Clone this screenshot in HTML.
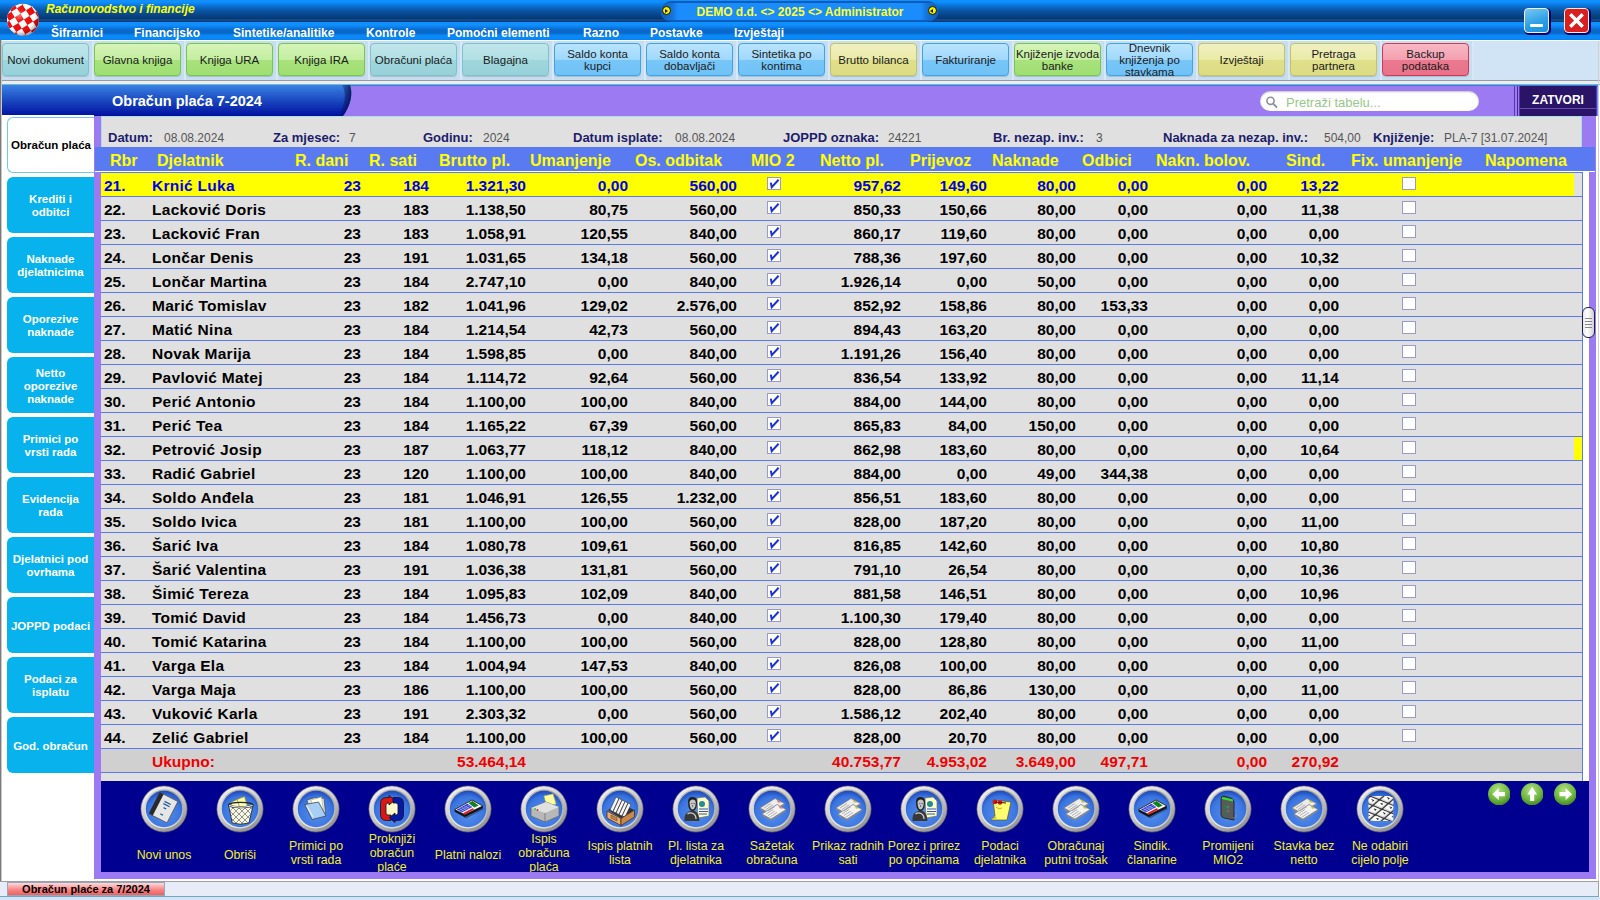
<!DOCTYPE html><html><head><meta charset="utf-8"><style>
*{margin:0;padding:0;box-sizing:border-box}
html,body{width:1600px;height:900px;overflow:hidden;background:#fff;font-family:"Liberation Sans", sans-serif}
.a{position:absolute}
.t{position:absolute;white-space:pre;line-height:20px}
.r{text-align:right}
.c{text-align:center}
#title{left:0;top:0;width:1600px;height:22px;background:linear-gradient(#1090ff 0px,#1090ff 2px,#0a78e0 5px,#0a58a8 10px,#08448a 15px,#063a70 18.5px,#0a4a90 19.5px,#0a4a90 20.5px,#083870 21px,#083870 22px)}
#menu{left:0;top:22px;width:1600px;height:18px;background:linear-gradient(#1090ff 0px,#1090ff 3px,#0a78e0 6px,#0a68c8 8px,#0a68c8 11px,#0a88f8 13.5px,#0a88f8 17px,#0080f0 18px)}
.mi{color:#fff;font-weight:bold;font-size:12px;top:22px;line-height:20px}
#tb{left:0;top:40px;width:1600px;height:41px;background:#d0e4f6;border-top:1px solid #ffffff;border-bottom:1px solid #9a9a9a}
.btn{position:absolute;top:43px;width:86px;height:33px;border-radius:4px;font-size:11.5px;color:#1a1a1a;text-align:center;display:flex;align-items:center;justify-content:center;line-height:12px;box-shadow:0 1px 1px rgba(0,0,0,.15)}
.teal{background:linear-gradient(#c0e6ea 0%,#b0dfe4 50%,#9ed6dc 51%,#98d2d8 100%);border:1px solid #7cc2ca}
.green{background:linear-gradient(#d6f4b8 0%,#c4eea0 50%,#a8e27c 51%,#a0de74 100%);border:1px solid #74c84c}
.blue{background:linear-gradient(#b8e4ff 0%,#a0d8fc 50%,#78c6f8 51%,#70c2f6 100%);border:1px solid #3ea4e8}
.yellow{background:linear-gradient(#f0f0c0 0%,#eaeaa8 50%,#e0e08c 51%,#dcdc84 100%);border:1px solid #c4c464}
.pink{background:linear-gradient(#f8b8c4 0%,#f4a0b0 50%,#ea7a90 51%,#e8728a 100%);border:1px solid #d03a5a}
.lab{font-weight:bold;font-size:13px;color:#1c1c6c;line-height:20px}
.val{font-size:12px;color:#555;line-height:20px}
.hd{font-weight:bold;font-size:16px;color:#ffff00;line-height:20px}
.rw{font-weight:bold;font-size:15.5px;color:#000;line-height:20px}
.sel{color:#0000f0}
.tot{color:#f00000}
.tab{position:absolute;left:7px;width:87px;height:56px;border-radius:6px 0 0 6px;background:#08b2ec;color:#fff;font-weight:bold;font-size:11.5px;line-height:13px;display:flex;align-items:center;justify-content:center;text-align:center;padding-top:2px}
.ic{position:absolute;top:786px;width:46px;height:46px}
.il{position:absolute;width:100px;color:#f0f020;font-size:12.3px;line-height:14px;text-align:center;display:flex;align-items:center;justify-content:center;height:60px;top:823px}
</style></head><body>
<div id="title" class="a"></div>
<div id="menu" class="a"></div>
<svg class="a" style="left:5px;top:2px" width="36" height="36" viewBox="0 0 36 36">
<defs><clipPath id="bc"><circle cx="17.9" cy="17.7" r="15.9"/></clipPath>
<radialGradient id="bs" cx="0.38" cy="0.36" r="0.7"><stop offset="0" stop-color="#fff" stop-opacity="0.45"/><stop offset="0.25" stop-color="#fff" stop-opacity="0.05"/><stop offset="0.7" stop-color="#000" stop-opacity="0"/><stop offset="1" stop-color="#000" stop-opacity="0.45"/></radialGradient></defs>
<g clip-path="url(#bc)"><rect width="36" height="36" fill="#fff"/>
<g fill="#ee0c0c" transform="rotate(-32 17 17)"><rect x="-8.0" y="-8.0" width="6.6" height="6.6"/><rect x="-8.0" y="5.2" width="6.6" height="6.6"/><rect x="-8.0" y="18.4" width="6.6" height="6.6"/><rect x="-8.0" y="31.6" width="6.6" height="6.6"/><rect x="-8.0" y="44.8" width="6.6" height="6.6"/><rect x="-1.4" y="-1.4" width="6.6" height="6.6"/><rect x="-1.4" y="11.8" width="6.6" height="6.6"/><rect x="-1.4" y="25.0" width="6.6" height="6.6"/><rect x="-1.4" y="38.2" width="6.6" height="6.6"/><rect x="5.2" y="-8.0" width="6.6" height="6.6"/><rect x="5.2" y="5.2" width="6.6" height="6.6"/><rect x="5.2" y="18.4" width="6.6" height="6.6"/><rect x="5.2" y="31.6" width="6.6" height="6.6"/><rect x="5.2" y="44.8" width="6.6" height="6.6"/><rect x="11.8" y="-1.4" width="6.6" height="6.6"/><rect x="11.8" y="11.8" width="6.6" height="6.6"/><rect x="11.8" y="25.0" width="6.6" height="6.6"/><rect x="11.8" y="38.2" width="6.6" height="6.6"/><rect x="18.4" y="-8.0" width="6.6" height="6.6"/><rect x="18.4" y="5.2" width="6.6" height="6.6"/><rect x="18.4" y="18.4" width="6.6" height="6.6"/><rect x="18.4" y="31.6" width="6.6" height="6.6"/><rect x="18.4" y="44.8" width="6.6" height="6.6"/><rect x="25.0" y="-1.4" width="6.6" height="6.6"/><rect x="25.0" y="11.8" width="6.6" height="6.6"/><rect x="25.0" y="25.0" width="6.6" height="6.6"/><rect x="25.0" y="38.2" width="6.6" height="6.6"/><rect x="31.6" y="-8.0" width="6.6" height="6.6"/><rect x="31.6" y="5.2" width="6.6" height="6.6"/><rect x="31.6" y="18.4" width="6.6" height="6.6"/><rect x="31.6" y="31.6" width="6.6" height="6.6"/><rect x="31.6" y="44.8" width="6.6" height="6.6"/><rect x="38.2" y="-1.4" width="6.6" height="6.6"/><rect x="38.2" y="11.8" width="6.6" height="6.6"/><rect x="38.2" y="25.0" width="6.6" height="6.6"/><rect x="38.2" y="38.2" width="6.6" height="6.6"/><rect x="44.8" y="-8.0" width="6.6" height="6.6"/><rect x="44.8" y="5.2" width="6.6" height="6.6"/><rect x="44.8" y="18.4" width="6.6" height="6.6"/><rect x="44.8" y="31.6" width="6.6" height="6.6"/><rect x="44.8" y="44.8" width="6.6" height="6.6"/></g><circle cx="17.9" cy="17.7" r="15.9" fill="url(#bs)"/></g></svg>
<div class="t " style="left:46px;top:0px;color:#ffff00;font-style:italic;font-weight:bold;font-size:12px;line-height:19px">Računovodstvo i financije</div>
<div class="a" style="left:661px;top:1px;width:277px;height:21px;border-radius:10px;background:#0c5cb8"></div>
<div class="a" style="left:661px;top:3px;width:277px;height:17px;border-radius:9px;background:#1a8cfc"></div>
<div class="a" style="left:661px;top:3px;width:17px;height:17px;border-radius:9px 0 0 9px;background:linear-gradient(90deg,#0c5ab4,#1676dc 70%,#1a8cfc)"></div>
<div class="a" style="left:921px;top:3px;width:17px;height:17px;border-radius:0 9px 9px 0;background:linear-gradient(270deg,#0c5ab4,#1676dc 70%,#1a8cfc)"></div>
<div class="a" style="left:662.0px;top:6px;width:9px;height:9px;border-radius:50%;background:#f8f000;border:1px solid #101000"></div>
<div class="a" style="left:665.0px;top:8.5px;width:0;height:0;border-top:2.5px solid transparent;border-bottom:2.5px solid transparent;border-left:3.5px solid #202020"></div>
<div class="a" style="left:928.0px;top:6px;width:9px;height:9px;border-radius:50%;background:#f8f000;border:1px solid #101000"></div>
<div class="a" style="left:931.0px;top:8.5px;width:0;height:0;border-top:2.5px solid transparent;border-bottom:2.5px solid transparent;border-right:3.5px solid #202020;margin-left:-1px"></div>
<div class="t c " style="left:650.0px;top:2.5px;width:300px;color:#ffff30;font-weight:bold;font-size:12px;line-height:19px">DEMO d.d. &lt;&gt; 2025 &lt;&gt; Administrator</div>
<div class="t mi" style="left:51px;top:23px;line-height:20px">Šifrarnici</div>
<div class="t mi" style="left:134px;top:23px;line-height:20px">Financijsko</div>
<div class="t mi" style="left:233px;top:23px;line-height:20px">Sintetike/analitike</div>
<div class="t mi" style="left:366px;top:23px;line-height:20px">Kontrole</div>
<div class="t mi" style="left:447px;top:23px;line-height:20px">Pomoćni elementi</div>
<div class="t mi" style="left:583px;top:23px;line-height:20px">Razno</div>
<div class="t mi" style="left:650px;top:23px;line-height:20px">Postavke</div>
<div class="t mi" style="left:734px;top:23px;line-height:20px">Izvještaji</div>
<div class="a" style="left:1524px;top:8px;width:25px;height:25px;border-radius:4px;background:linear-gradient(160deg,#78c8f4,#2a9ee4 60%,#1890d8);border:1.5px solid #f4f0d8;box-shadow:1px 1px 0 1px #000070"></div>
<div class="a" style="left:1530px;top:24px;width:13px;height:3px;border-radius:1px;background:#fff"></div>
<div class="a" style="left:1564px;top:8px;width:25px;height:25px;border-radius:4px;background:#d82020;border:1.5px solid #f4f0d8;box-shadow:1px 1px 0 1px #000070"></div>
<svg class="a" style="left:1564px;top:8px" width="25" height="25"><path d="M7.5 7.5 L17.5 17.5 M17.5 7.5 L7.5 17.5" stroke="#fff" stroke-width="3.4" stroke-linecap="square"/></svg>
<div id="tb" class="a"></div>
<div class="a" style="left:0px;top:41px;width:92px;height:39px;background:#c6def0;border-left:2px solid #d8e8f8"></div>
<div class="a" style="left:92px;top:41px;width:92px;height:39px;background:#c6def0;border-left:2px solid #d8e8f8"></div>
<div class="a" style="left:184px;top:41px;width:92px;height:39px;background:#c6def0;border-left:2px solid #d8e8f8"></div>
<div class="a" style="left:276px;top:41px;width:92px;height:39px;background:#c6def0;border-left:2px solid #d8e8f8"></div>
<div class="a" style="left:368px;top:41px;width:92px;height:39px;background:#c6def0;border-left:2px solid #d8e8f8"></div>
<div class="a" style="left:460px;top:41px;width:92px;height:39px;background:#c6def0;border-left:2px solid #d8e8f8"></div>
<div class="a" style="left:552px;top:41px;width:92px;height:39px;background:#c6def0;border-left:2px solid #d8e8f8"></div>
<div class="a" style="left:644px;top:41px;width:92px;height:39px;background:#c6def0;border-left:2px solid #d8e8f8"></div>
<div class="a" style="left:736px;top:41px;width:92px;height:39px;background:#c6def0;border-left:2px solid #d8e8f8"></div>
<div class="a" style="left:828px;top:41px;width:92px;height:39px;background:#c6def0;border-left:2px solid #d8e8f8"></div>
<div class="a" style="left:920px;top:41px;width:92px;height:39px;background:#c6def0;border-left:2px solid #d8e8f8"></div>
<div class="a" style="left:1012px;top:41px;width:92px;height:39px;background:#c6def0;border-left:2px solid #d8e8f8"></div>
<div class="a" style="left:1104px;top:41px;width:92px;height:39px;background:#c6def0;border-left:2px solid #d8e8f8"></div>
<div class="a" style="left:1196px;top:41px;width:92px;height:39px;background:#c6def0;border-left:2px solid #d8e8f8"></div>
<div class="a" style="left:1288px;top:41px;width:92px;height:39px;background:#c6def0;border-left:2px solid #d8e8f8"></div>
<div class="a" style="left:1380px;top:41px;width:92px;height:39px;background:#c6def0;border-left:2px solid #d8e8f8"></div>
<div class="btn teal" style="left:2px;width:87px">Novi dokument</div>
<div class="btn green" style="left:94px;width:87px">Glavna knjiga</div>
<div class="btn green" style="left:186px;width:87px">Knjiga URA</div>
<div class="btn green" style="left:278px;width:87px">Knjiga IRA</div>
<div class="btn teal" style="left:370px;width:87px">Obračuni plaća</div>
<div class="btn teal" style="left:462px;width:87px">Blagajna</div>
<div class="btn blue" style="left:554px;width:87px">Saldo konta<br>kupci</div>
<div class="btn blue" style="left:646px;width:87px">Saldo konta<br>dobavljači</div>
<div class="btn blue" style="left:738px;width:87px">Sintetika po<br>kontima</div>
<div class="btn yellow" style="left:830px;width:87px">Brutto bilanca</div>
<div class="btn blue" style="left:922px;width:87px">Fakturiranje</div>
<div class="btn green" style="left:1014px;width:87px">Knjiženje izvoda<br>banke</div>
<div class="btn blue" style="left:1106px;width:87px">Dnevnik<br>knjiženja po<br>stavkama</div>
<div class="btn yellow" style="left:1198px;width:87px">Izvještaji</div>
<div class="btn yellow" style="left:1290px;width:87px">Pretraga<br>partnera</div>
<div class="btn pink" style="left:1382px;width:87px">Backup<br>podataka</div>
<div class="a" style="left:1472px;top:41px;width:128px;height:39px;background:#d0e4f6;border-left:2px solid #d8e8f8"></div>
<div class="a" style="left:0;top:81px;width:1600px;height:3px;background:#e8eef8"></div>
<div class="a" style="left:0;top:84px;width:1600px;height:1px;background:#70b8d8"></div>
<div class="a" style="left:2px;top:85px;width:1596px;height:31px;background:#9b7af2;border-top:1px solid #3a7ae0"></div>
<svg class="a" style="left:2px;top:85px" width="360" height="31" viewBox="0 0 360 31"><defs><linearGradient id="hg" x1="0" y1="0" x2="0" y2="1"><stop offset="0" stop-color="#3a82e4"/><stop offset="0.5" stop-color="#1a48c0"/><stop offset="1" stop-color="#0010a0"/></linearGradient><linearGradient id="hs" x1="0" y1="0" x2="1" y2="0"><stop offset="0" stop-color="#000040" stop-opacity="0"/><stop offset="1" stop-color="#000030" stop-opacity="0.7"/></linearGradient></defs><path d="M0 0 H348 C351 8 349 20 341 31 H0 Z" fill="url(#hg)"/><path d="M340 0 H348 C351 8 349 20 341 31 H336 C343 20 345 8 340 0Z" fill="url(#hs)"/></svg>
<div class="t " style="left:112px;top:91px;color:#fff;font-weight:bold;font-size:14.5px;line-height:20px">Obračun plaća 7-2024</div>
<div class="a" style="left:1260px;top:91px;width:219px;height:20px;border-radius:10px;background:#fff;box-shadow:inset 0 1px 2px rgba(0,0,0,.25)"></div>
<svg class="a" style="left:1264px;top:94px" width="16" height="16"><circle cx="6.5" cy="6.8" r="3.6" fill="none" stroke="#909098" stroke-width="1.6"/><path d="M9.2 9.6 L12.5 13" stroke="#909098" stroke-width="1.8" stroke-linecap="round"/></svg>
<div class="t " style="left:1286px;top:93px;color:#98c888;font-size:13px;line-height:20px">Pretraži tabelu...</div>
<div class="a" style="left:1514px;top:86px;width:1px;height:30px;background:#5a3aa8"></div>
<div class="a" style="left:1516.5px;top:86px;width:1px;height:30px;background:#4a2a98"></div>
<div class="a" style="left:1519px;top:86px;width:1px;height:30px;background:#5a3aa8"></div>
<div class="a" style="left:1520px;top:86px;width:76px;height:30px;background:#2a1468"></div>
<div class="a" style="left:1596px;top:86px;width:1px;height:30px;background:#1a50d0"></div>
<div class="a" style="left:1520px;top:108px;width:76px;height:1px;background:#6a4ab0"></div>
<div class="t c " style="left:1520.0px;top:90px;width:76px;color:#fff;font-weight:bold;font-size:12px;line-height:20px">ZATVORI</div>
<div class="a" style="left:2px;top:115px;width:92px;height:1px;background:#fff"></div>
<div class="a" style="left:0;top:40px;width:1px;height:842px;background:#7a7a7a"></div><div class="a" style="left:1px;top:40px;width:1px;height:842px;background:#c8c8c8"></div>
<div class="tab" style="top:117px;background:#fff;color:#000;border:1px solid #70c8ec;border-right:none;font-size:11.5px;padding-top:0">Obračun plaća</div>
<div class="tab" style="top:177px">Krediti i<br>odbitci</div>
<div class="tab" style="top:237px">Naknade<br>djelatnicima</div>
<div class="tab" style="top:297px">Oporezive<br>naknade</div>
<div class="tab" style="top:357px">Netto<br>oporezive<br>naknade</div>
<div class="tab" style="top:417px">Primici po<br>vrsti rada</div>
<div class="tab" style="top:477px">Evidencija<br>rada</div>
<div class="tab" style="top:537px">Djelatnici pod<br>ovrhama</div>
<div class="tab" style="top:597px">JOPPD podaci</div>
<div class="tab" style="top:657px">Podaci za<br>isplatu</div>
<div class="tab" style="top:717px">God. obračun</div>
<div class="a" style="left:94px;top:116px;width:1502px;height:763px;background:#9b7af2"></div>
<div class="a" style="left:101px;top:116px;width:1481px;height:31px;background:#e0e0e0;border-left:1px solid #a8e0e8;border-top:1px solid #a8e0e8;border-right:1px solid #a8e0e8"></div>
<div class="t lab" style="left:108px;top:128px;">Datum:</div>
<div class="t val" style="left:164px;top:128px;">08.08.2024</div>
<div class="t lab" style="left:273px;top:128px;">Za mjesec:</div>
<div class="t val" style="left:349px;top:128px;">7</div>
<div class="t lab" style="left:423px;top:128px;">Godinu:</div>
<div class="t val" style="left:483px;top:128px;">2024</div>
<div class="t lab" style="left:573px;top:128px;">Datum isplate:</div>
<div class="t val" style="left:675px;top:128px;">08.08.2024</div>
<div class="t lab" style="left:783px;top:128px;">JOPPD oznaka:</div>
<div class="t val" style="left:888px;top:128px;">24221</div>
<div class="t lab" style="left:993px;top:128px;">Br. nezap. inv.:</div>
<div class="t val" style="left:1096px;top:128px;">3</div>
<div class="t lab" style="left:1163px;top:128px;">Naknada za nezap. inv.:</div>
<div class="t val" style="left:1324px;top:128px;">504,00</div>
<div class="t lab" style="left:1373px;top:128px;">Knjiženje:</div>
<div class="t val" style="left:1444px;top:128px;">PLA-7 [31.07.2024]</div>
<div class="a" style="left:95px;top:147px;width:1500px;height:24px;background:#5a7af2"></div>
<div class="a" style="left:95px;top:171px;width:1500px;height:1px;background:#fff"></div>
<div class="t hd" style="left:110px;top:151px;">Rbr</div>
<div class="t hd" style="left:157px;top:151px;">Djelatnik</div>
<div class="t hd" style="left:295px;top:151px;">R. dani</div>
<div class="t hd" style="left:369px;top:151px;">R. sati</div>
<div class="t hd" style="left:439px;top:151px;">Brutto pl.</div>
<div class="t hd" style="left:530px;top:151px;">Umanjenje</div>
<div class="t hd" style="left:635px;top:151px;">Os. odbitak</div>
<div class="t hd" style="left:751px;top:151px;">MIO 2</div>
<div class="t hd" style="left:820px;top:151px;">Netto pl.</div>
<div class="t hd" style="left:910px;top:151px;">Prijevoz</div>
<div class="t hd" style="left:992px;top:151px;">Naknade</div>
<div class="t hd" style="left:1082px;top:151px;">Odbici</div>
<div class="t hd" style="left:1156px;top:151px;">Nakn. bolov.</div>
<div class="t hd" style="left:1286px;top:151px;">Sind.</div>
<div class="t hd" style="left:1351px;top:151px;">Fix. umanjenje</div>
<div class="t hd" style="left:1485px;top:151px;">Napomena</div>
<div class="a" style="left:101px;top:172px;width:1482px;height:609px;background:#e0e0e0"></div>
<div class="a" style="left:1583px;top:172px;width:6px;height:609px;background:#fff"></div>
<div class="a" style="left:101px;top:172px;width:1482px;height:1px;background:#5a7af0"></div>
<div class="a" style="left:101px;top:173px;width:1473px;height:23px;background:#ffff00"></div>
<div class="t rw sel" style="left:104px;top:176px;">21.</div>
<div class="t rw sel" style="left:152px;top:176px;letter-spacing:0.28px">Krnić Luka</div>
<div class="t r rw sel" style="left:61px;top:176px;width:300px;">23</div>
<div class="t r rw sel" style="left:129px;top:176px;width:300px;">184</div>
<div class="t r rw sel" style="left:226px;top:176px;width:300px;">1.321,30</div>
<div class="t r rw sel" style="left:328px;top:176px;width:300px;">0,00</div>
<div class="t r rw sel" style="left:437px;top:176px;width:300px;">560,00</div>
<div class="t r rw sel" style="left:601px;top:176px;width:300px;">957,62</div>
<div class="t r rw sel" style="left:687px;top:176px;width:300px;">149,60</div>
<div class="t r rw sel" style="left:776px;top:176px;width:300px;">80,00</div>
<div class="t r rw sel" style="left:848px;top:176px;width:300px;">0,00</div>
<div class="t r rw sel" style="left:967px;top:176px;width:300px;">0,00</div>
<div class="t r rw sel" style="left:1039px;top:176px;width:300px;">13,22</div>
<div class="a" style="left:767px;top:177px;width:14px;height:13px;background:#fff;border:1px solid #9a9ac8"></div>
<svg class="a" style="left:767px;top:177px" width="14" height="13"><path d="M3.8 5.6 L4.7 10.1 L11.6 2.8" fill="none" stroke="#1a30d8" stroke-width="2"/></svg>
<div class="a" style="left:1402px;top:177px;width:14px;height:13px;background:#fff;border:1px solid #9a9ac8"></div>
<div class="a" style="left:101px;top:196px;width:1482px;height:1px;background:#5a7af0"></div>
<div class="t rw" style="left:104px;top:200px;">22.</div>
<div class="t rw" style="left:152px;top:200px;letter-spacing:0.28px">Lacković Doris</div>
<div class="t r rw" style="left:61px;top:200px;width:300px;">23</div>
<div class="t r rw" style="left:129px;top:200px;width:300px;">183</div>
<div class="t r rw" style="left:226px;top:200px;width:300px;">1.138,50</div>
<div class="t r rw" style="left:328px;top:200px;width:300px;">80,75</div>
<div class="t r rw" style="left:437px;top:200px;width:300px;">560,00</div>
<div class="t r rw" style="left:601px;top:200px;width:300px;">850,33</div>
<div class="t r rw" style="left:687px;top:200px;width:300px;">150,66</div>
<div class="t r rw" style="left:776px;top:200px;width:300px;">80,00</div>
<div class="t r rw" style="left:848px;top:200px;width:300px;">0,00</div>
<div class="t r rw" style="left:967px;top:200px;width:300px;">0,00</div>
<div class="t r rw" style="left:1039px;top:200px;width:300px;">11,38</div>
<div class="a" style="left:767px;top:201px;width:14px;height:13px;background:#fff;border:1px solid #9a9ac8"></div>
<svg class="a" style="left:767px;top:201px" width="14" height="13"><path d="M3.8 5.6 L4.7 10.1 L11.6 2.8" fill="none" stroke="#1a30d8" stroke-width="2"/></svg>
<div class="a" style="left:1402px;top:201px;width:14px;height:13px;background:#fff;border:1px solid #9a9ac8"></div>
<div class="a" style="left:101px;top:220px;width:1482px;height:1px;background:#5a7af0"></div>
<div class="t rw" style="left:104px;top:224px;">23.</div>
<div class="t rw" style="left:152px;top:224px;letter-spacing:0.28px">Lacković Fran</div>
<div class="t r rw" style="left:61px;top:224px;width:300px;">23</div>
<div class="t r rw" style="left:129px;top:224px;width:300px;">183</div>
<div class="t r rw" style="left:226px;top:224px;width:300px;">1.058,91</div>
<div class="t r rw" style="left:328px;top:224px;width:300px;">120,55</div>
<div class="t r rw" style="left:437px;top:224px;width:300px;">840,00</div>
<div class="t r rw" style="left:601px;top:224px;width:300px;">860,17</div>
<div class="t r rw" style="left:687px;top:224px;width:300px;">119,60</div>
<div class="t r rw" style="left:776px;top:224px;width:300px;">80,00</div>
<div class="t r rw" style="left:848px;top:224px;width:300px;">0,00</div>
<div class="t r rw" style="left:967px;top:224px;width:300px;">0,00</div>
<div class="t r rw" style="left:1039px;top:224px;width:300px;">0,00</div>
<div class="a" style="left:767px;top:225px;width:14px;height:13px;background:#fff;border:1px solid #9a9ac8"></div>
<svg class="a" style="left:767px;top:225px" width="14" height="13"><path d="M3.8 5.6 L4.7 10.1 L11.6 2.8" fill="none" stroke="#1a30d8" stroke-width="2"/></svg>
<div class="a" style="left:1402px;top:225px;width:14px;height:13px;background:#fff;border:1px solid #9a9ac8"></div>
<div class="a" style="left:101px;top:244px;width:1482px;height:1px;background:#5a7af0"></div>
<div class="t rw" style="left:104px;top:248px;">24.</div>
<div class="t rw" style="left:152px;top:248px;letter-spacing:0.28px">Lončar Denis</div>
<div class="t r rw" style="left:61px;top:248px;width:300px;">23</div>
<div class="t r rw" style="left:129px;top:248px;width:300px;">191</div>
<div class="t r rw" style="left:226px;top:248px;width:300px;">1.031,65</div>
<div class="t r rw" style="left:328px;top:248px;width:300px;">134,18</div>
<div class="t r rw" style="left:437px;top:248px;width:300px;">560,00</div>
<div class="t r rw" style="left:601px;top:248px;width:300px;">788,36</div>
<div class="t r rw" style="left:687px;top:248px;width:300px;">197,60</div>
<div class="t r rw" style="left:776px;top:248px;width:300px;">80,00</div>
<div class="t r rw" style="left:848px;top:248px;width:300px;">0,00</div>
<div class="t r rw" style="left:967px;top:248px;width:300px;">0,00</div>
<div class="t r rw" style="left:1039px;top:248px;width:300px;">10,32</div>
<div class="a" style="left:767px;top:249px;width:14px;height:13px;background:#fff;border:1px solid #9a9ac8"></div>
<svg class="a" style="left:767px;top:249px" width="14" height="13"><path d="M3.8 5.6 L4.7 10.1 L11.6 2.8" fill="none" stroke="#1a30d8" stroke-width="2"/></svg>
<div class="a" style="left:1402px;top:249px;width:14px;height:13px;background:#fff;border:1px solid #9a9ac8"></div>
<div class="a" style="left:101px;top:268px;width:1482px;height:1px;background:#5a7af0"></div>
<div class="t rw" style="left:104px;top:272px;">25.</div>
<div class="t rw" style="left:152px;top:272px;letter-spacing:0.28px">Lončar Martina</div>
<div class="t r rw" style="left:61px;top:272px;width:300px;">23</div>
<div class="t r rw" style="left:129px;top:272px;width:300px;">184</div>
<div class="t r rw" style="left:226px;top:272px;width:300px;">2.747,10</div>
<div class="t r rw" style="left:328px;top:272px;width:300px;">0,00</div>
<div class="t r rw" style="left:437px;top:272px;width:300px;">840,00</div>
<div class="t r rw" style="left:601px;top:272px;width:300px;">1.926,14</div>
<div class="t r rw" style="left:687px;top:272px;width:300px;">0,00</div>
<div class="t r rw" style="left:776px;top:272px;width:300px;">50,00</div>
<div class="t r rw" style="left:848px;top:272px;width:300px;">0,00</div>
<div class="t r rw" style="left:967px;top:272px;width:300px;">0,00</div>
<div class="t r rw" style="left:1039px;top:272px;width:300px;">0,00</div>
<div class="a" style="left:767px;top:273px;width:14px;height:13px;background:#fff;border:1px solid #9a9ac8"></div>
<svg class="a" style="left:767px;top:273px" width="14" height="13"><path d="M3.8 5.6 L4.7 10.1 L11.6 2.8" fill="none" stroke="#1a30d8" stroke-width="2"/></svg>
<div class="a" style="left:1402px;top:273px;width:14px;height:13px;background:#fff;border:1px solid #9a9ac8"></div>
<div class="a" style="left:101px;top:292px;width:1482px;height:1px;background:#5a7af0"></div>
<div class="t rw" style="left:104px;top:296px;">26.</div>
<div class="t rw" style="left:152px;top:296px;letter-spacing:0.28px">Marić Tomislav</div>
<div class="t r rw" style="left:61px;top:296px;width:300px;">23</div>
<div class="t r rw" style="left:129px;top:296px;width:300px;">182</div>
<div class="t r rw" style="left:226px;top:296px;width:300px;">1.041,96</div>
<div class="t r rw" style="left:328px;top:296px;width:300px;">129,02</div>
<div class="t r rw" style="left:437px;top:296px;width:300px;">2.576,00</div>
<div class="t r rw" style="left:601px;top:296px;width:300px;">852,92</div>
<div class="t r rw" style="left:687px;top:296px;width:300px;">158,86</div>
<div class="t r rw" style="left:776px;top:296px;width:300px;">80,00</div>
<div class="t r rw" style="left:848px;top:296px;width:300px;">153,33</div>
<div class="t r rw" style="left:967px;top:296px;width:300px;">0,00</div>
<div class="t r rw" style="left:1039px;top:296px;width:300px;">0,00</div>
<div class="a" style="left:767px;top:297px;width:14px;height:13px;background:#fff;border:1px solid #9a9ac8"></div>
<svg class="a" style="left:767px;top:297px" width="14" height="13"><path d="M3.8 5.6 L4.7 10.1 L11.6 2.8" fill="none" stroke="#1a30d8" stroke-width="2"/></svg>
<div class="a" style="left:1402px;top:297px;width:14px;height:13px;background:#fff;border:1px solid #9a9ac8"></div>
<div class="a" style="left:101px;top:316px;width:1482px;height:1px;background:#5a7af0"></div>
<div class="t rw" style="left:104px;top:320px;">27.</div>
<div class="t rw" style="left:152px;top:320px;letter-spacing:0.28px">Matić Nina</div>
<div class="t r rw" style="left:61px;top:320px;width:300px;">23</div>
<div class="t r rw" style="left:129px;top:320px;width:300px;">184</div>
<div class="t r rw" style="left:226px;top:320px;width:300px;">1.214,54</div>
<div class="t r rw" style="left:328px;top:320px;width:300px;">42,73</div>
<div class="t r rw" style="left:437px;top:320px;width:300px;">560,00</div>
<div class="t r rw" style="left:601px;top:320px;width:300px;">894,43</div>
<div class="t r rw" style="left:687px;top:320px;width:300px;">163,20</div>
<div class="t r rw" style="left:776px;top:320px;width:300px;">80,00</div>
<div class="t r rw" style="left:848px;top:320px;width:300px;">0,00</div>
<div class="t r rw" style="left:967px;top:320px;width:300px;">0,00</div>
<div class="t r rw" style="left:1039px;top:320px;width:300px;">0,00</div>
<div class="a" style="left:767px;top:321px;width:14px;height:13px;background:#fff;border:1px solid #9a9ac8"></div>
<svg class="a" style="left:767px;top:321px" width="14" height="13"><path d="M3.8 5.6 L4.7 10.1 L11.6 2.8" fill="none" stroke="#1a30d8" stroke-width="2"/></svg>
<div class="a" style="left:1402px;top:321px;width:14px;height:13px;background:#fff;border:1px solid #9a9ac8"></div>
<div class="a" style="left:101px;top:340px;width:1482px;height:1px;background:#5a7af0"></div>
<div class="t rw" style="left:104px;top:344px;">28.</div>
<div class="t rw" style="left:152px;top:344px;letter-spacing:0.28px">Novak Marija</div>
<div class="t r rw" style="left:61px;top:344px;width:300px;">23</div>
<div class="t r rw" style="left:129px;top:344px;width:300px;">184</div>
<div class="t r rw" style="left:226px;top:344px;width:300px;">1.598,85</div>
<div class="t r rw" style="left:328px;top:344px;width:300px;">0,00</div>
<div class="t r rw" style="left:437px;top:344px;width:300px;">840,00</div>
<div class="t r rw" style="left:601px;top:344px;width:300px;">1.191,26</div>
<div class="t r rw" style="left:687px;top:344px;width:300px;">156,40</div>
<div class="t r rw" style="left:776px;top:344px;width:300px;">80,00</div>
<div class="t r rw" style="left:848px;top:344px;width:300px;">0,00</div>
<div class="t r rw" style="left:967px;top:344px;width:300px;">0,00</div>
<div class="t r rw" style="left:1039px;top:344px;width:300px;">0,00</div>
<div class="a" style="left:767px;top:345px;width:14px;height:13px;background:#fff;border:1px solid #9a9ac8"></div>
<svg class="a" style="left:767px;top:345px" width="14" height="13"><path d="M3.8 5.6 L4.7 10.1 L11.6 2.8" fill="none" stroke="#1a30d8" stroke-width="2"/></svg>
<div class="a" style="left:1402px;top:345px;width:14px;height:13px;background:#fff;border:1px solid #9a9ac8"></div>
<div class="a" style="left:101px;top:364px;width:1482px;height:1px;background:#5a7af0"></div>
<div class="t rw" style="left:104px;top:368px;">29.</div>
<div class="t rw" style="left:152px;top:368px;letter-spacing:0.28px">Pavlović Matej</div>
<div class="t r rw" style="left:61px;top:368px;width:300px;">23</div>
<div class="t r rw" style="left:129px;top:368px;width:300px;">184</div>
<div class="t r rw" style="left:226px;top:368px;width:300px;">1.114,72</div>
<div class="t r rw" style="left:328px;top:368px;width:300px;">92,64</div>
<div class="t r rw" style="left:437px;top:368px;width:300px;">560,00</div>
<div class="t r rw" style="left:601px;top:368px;width:300px;">836,54</div>
<div class="t r rw" style="left:687px;top:368px;width:300px;">133,92</div>
<div class="t r rw" style="left:776px;top:368px;width:300px;">80,00</div>
<div class="t r rw" style="left:848px;top:368px;width:300px;">0,00</div>
<div class="t r rw" style="left:967px;top:368px;width:300px;">0,00</div>
<div class="t r rw" style="left:1039px;top:368px;width:300px;">11,14</div>
<div class="a" style="left:767px;top:369px;width:14px;height:13px;background:#fff;border:1px solid #9a9ac8"></div>
<svg class="a" style="left:767px;top:369px" width="14" height="13"><path d="M3.8 5.6 L4.7 10.1 L11.6 2.8" fill="none" stroke="#1a30d8" stroke-width="2"/></svg>
<div class="a" style="left:1402px;top:369px;width:14px;height:13px;background:#fff;border:1px solid #9a9ac8"></div>
<div class="a" style="left:101px;top:388px;width:1482px;height:1px;background:#5a7af0"></div>
<div class="t rw" style="left:104px;top:392px;">30.</div>
<div class="t rw" style="left:152px;top:392px;letter-spacing:0.28px">Perić Antonio</div>
<div class="t r rw" style="left:61px;top:392px;width:300px;">23</div>
<div class="t r rw" style="left:129px;top:392px;width:300px;">184</div>
<div class="t r rw" style="left:226px;top:392px;width:300px;">1.100,00</div>
<div class="t r rw" style="left:328px;top:392px;width:300px;">100,00</div>
<div class="t r rw" style="left:437px;top:392px;width:300px;">840,00</div>
<div class="t r rw" style="left:601px;top:392px;width:300px;">884,00</div>
<div class="t r rw" style="left:687px;top:392px;width:300px;">144,00</div>
<div class="t r rw" style="left:776px;top:392px;width:300px;">80,00</div>
<div class="t r rw" style="left:848px;top:392px;width:300px;">0,00</div>
<div class="t r rw" style="left:967px;top:392px;width:300px;">0,00</div>
<div class="t r rw" style="left:1039px;top:392px;width:300px;">0,00</div>
<div class="a" style="left:767px;top:393px;width:14px;height:13px;background:#fff;border:1px solid #9a9ac8"></div>
<svg class="a" style="left:767px;top:393px" width="14" height="13"><path d="M3.8 5.6 L4.7 10.1 L11.6 2.8" fill="none" stroke="#1a30d8" stroke-width="2"/></svg>
<div class="a" style="left:1402px;top:393px;width:14px;height:13px;background:#fff;border:1px solid #9a9ac8"></div>
<div class="a" style="left:101px;top:412px;width:1482px;height:1px;background:#5a7af0"></div>
<div class="t rw" style="left:104px;top:416px;">31.</div>
<div class="t rw" style="left:152px;top:416px;letter-spacing:0.28px">Perić Tea</div>
<div class="t r rw" style="left:61px;top:416px;width:300px;">23</div>
<div class="t r rw" style="left:129px;top:416px;width:300px;">184</div>
<div class="t r rw" style="left:226px;top:416px;width:300px;">1.165,22</div>
<div class="t r rw" style="left:328px;top:416px;width:300px;">67,39</div>
<div class="t r rw" style="left:437px;top:416px;width:300px;">560,00</div>
<div class="t r rw" style="left:601px;top:416px;width:300px;">865,83</div>
<div class="t r rw" style="left:687px;top:416px;width:300px;">84,00</div>
<div class="t r rw" style="left:776px;top:416px;width:300px;">150,00</div>
<div class="t r rw" style="left:848px;top:416px;width:300px;">0,00</div>
<div class="t r rw" style="left:967px;top:416px;width:300px;">0,00</div>
<div class="t r rw" style="left:1039px;top:416px;width:300px;">0,00</div>
<div class="a" style="left:767px;top:417px;width:14px;height:13px;background:#fff;border:1px solid #9a9ac8"></div>
<svg class="a" style="left:767px;top:417px" width="14" height="13"><path d="M3.8 5.6 L4.7 10.1 L11.6 2.8" fill="none" stroke="#1a30d8" stroke-width="2"/></svg>
<div class="a" style="left:1402px;top:417px;width:14px;height:13px;background:#fff;border:1px solid #9a9ac8"></div>
<div class="a" style="left:101px;top:436px;width:1482px;height:1px;background:#5a7af0"></div>
<div class="t rw" style="left:104px;top:440px;">32.</div>
<div class="t rw" style="left:152px;top:440px;letter-spacing:0.28px">Petrović Josip</div>
<div class="t r rw" style="left:61px;top:440px;width:300px;">23</div>
<div class="t r rw" style="left:129px;top:440px;width:300px;">187</div>
<div class="t r rw" style="left:226px;top:440px;width:300px;">1.063,77</div>
<div class="t r rw" style="left:328px;top:440px;width:300px;">118,12</div>
<div class="t r rw" style="left:437px;top:440px;width:300px;">840,00</div>
<div class="t r rw" style="left:601px;top:440px;width:300px;">862,98</div>
<div class="t r rw" style="left:687px;top:440px;width:300px;">183,60</div>
<div class="t r rw" style="left:776px;top:440px;width:300px;">80,00</div>
<div class="t r rw" style="left:848px;top:440px;width:300px;">0,00</div>
<div class="t r rw" style="left:967px;top:440px;width:300px;">0,00</div>
<div class="t r rw" style="left:1039px;top:440px;width:300px;">10,64</div>
<div class="a" style="left:767px;top:441px;width:14px;height:13px;background:#fff;border:1px solid #9a9ac8"></div>
<svg class="a" style="left:767px;top:441px" width="14" height="13"><path d="M3.8 5.6 L4.7 10.1 L11.6 2.8" fill="none" stroke="#1a30d8" stroke-width="2"/></svg>
<div class="a" style="left:1402px;top:441px;width:14px;height:13px;background:#fff;border:1px solid #9a9ac8"></div>
<div class="a" style="left:101px;top:460px;width:1482px;height:1px;background:#5a7af0"></div>
<div class="t rw" style="left:104px;top:464px;">33.</div>
<div class="t rw" style="left:152px;top:464px;letter-spacing:0.28px">Radić Gabriel</div>
<div class="t r rw" style="left:61px;top:464px;width:300px;">23</div>
<div class="t r rw" style="left:129px;top:464px;width:300px;">120</div>
<div class="t r rw" style="left:226px;top:464px;width:300px;">1.100,00</div>
<div class="t r rw" style="left:328px;top:464px;width:300px;">100,00</div>
<div class="t r rw" style="left:437px;top:464px;width:300px;">840,00</div>
<div class="t r rw" style="left:601px;top:464px;width:300px;">884,00</div>
<div class="t r rw" style="left:687px;top:464px;width:300px;">0,00</div>
<div class="t r rw" style="left:776px;top:464px;width:300px;">49,00</div>
<div class="t r rw" style="left:848px;top:464px;width:300px;">344,38</div>
<div class="t r rw" style="left:967px;top:464px;width:300px;">0,00</div>
<div class="t r rw" style="left:1039px;top:464px;width:300px;">0,00</div>
<div class="a" style="left:767px;top:465px;width:14px;height:13px;background:#fff;border:1px solid #9a9ac8"></div>
<svg class="a" style="left:767px;top:465px" width="14" height="13"><path d="M3.8 5.6 L4.7 10.1 L11.6 2.8" fill="none" stroke="#1a30d8" stroke-width="2"/></svg>
<div class="a" style="left:1402px;top:465px;width:14px;height:13px;background:#fff;border:1px solid #9a9ac8"></div>
<div class="a" style="left:101px;top:484px;width:1482px;height:1px;background:#5a7af0"></div>
<div class="t rw" style="left:104px;top:488px;">34.</div>
<div class="t rw" style="left:152px;top:488px;letter-spacing:0.28px">Soldo Anđela</div>
<div class="t r rw" style="left:61px;top:488px;width:300px;">23</div>
<div class="t r rw" style="left:129px;top:488px;width:300px;">181</div>
<div class="t r rw" style="left:226px;top:488px;width:300px;">1.046,91</div>
<div class="t r rw" style="left:328px;top:488px;width:300px;">126,55</div>
<div class="t r rw" style="left:437px;top:488px;width:300px;">1.232,00</div>
<div class="t r rw" style="left:601px;top:488px;width:300px;">856,51</div>
<div class="t r rw" style="left:687px;top:488px;width:300px;">183,60</div>
<div class="t r rw" style="left:776px;top:488px;width:300px;">80,00</div>
<div class="t r rw" style="left:848px;top:488px;width:300px;">0,00</div>
<div class="t r rw" style="left:967px;top:488px;width:300px;">0,00</div>
<div class="t r rw" style="left:1039px;top:488px;width:300px;">0,00</div>
<div class="a" style="left:767px;top:489px;width:14px;height:13px;background:#fff;border:1px solid #9a9ac8"></div>
<svg class="a" style="left:767px;top:489px" width="14" height="13"><path d="M3.8 5.6 L4.7 10.1 L11.6 2.8" fill="none" stroke="#1a30d8" stroke-width="2"/></svg>
<div class="a" style="left:1402px;top:489px;width:14px;height:13px;background:#fff;border:1px solid #9a9ac8"></div>
<div class="a" style="left:101px;top:508px;width:1482px;height:1px;background:#5a7af0"></div>
<div class="t rw" style="left:104px;top:512px;">35.</div>
<div class="t rw" style="left:152px;top:512px;letter-spacing:0.28px">Soldo Ivica</div>
<div class="t r rw" style="left:61px;top:512px;width:300px;">23</div>
<div class="t r rw" style="left:129px;top:512px;width:300px;">181</div>
<div class="t r rw" style="left:226px;top:512px;width:300px;">1.100,00</div>
<div class="t r rw" style="left:328px;top:512px;width:300px;">100,00</div>
<div class="t r rw" style="left:437px;top:512px;width:300px;">560,00</div>
<div class="t r rw" style="left:601px;top:512px;width:300px;">828,00</div>
<div class="t r rw" style="left:687px;top:512px;width:300px;">187,20</div>
<div class="t r rw" style="left:776px;top:512px;width:300px;">80,00</div>
<div class="t r rw" style="left:848px;top:512px;width:300px;">0,00</div>
<div class="t r rw" style="left:967px;top:512px;width:300px;">0,00</div>
<div class="t r rw" style="left:1039px;top:512px;width:300px;">11,00</div>
<div class="a" style="left:767px;top:513px;width:14px;height:13px;background:#fff;border:1px solid #9a9ac8"></div>
<svg class="a" style="left:767px;top:513px" width="14" height="13"><path d="M3.8 5.6 L4.7 10.1 L11.6 2.8" fill="none" stroke="#1a30d8" stroke-width="2"/></svg>
<div class="a" style="left:1402px;top:513px;width:14px;height:13px;background:#fff;border:1px solid #9a9ac8"></div>
<div class="a" style="left:101px;top:532px;width:1482px;height:1px;background:#5a7af0"></div>
<div class="t rw" style="left:104px;top:536px;">36.</div>
<div class="t rw" style="left:152px;top:536px;letter-spacing:0.28px">Šarić Iva</div>
<div class="t r rw" style="left:61px;top:536px;width:300px;">23</div>
<div class="t r rw" style="left:129px;top:536px;width:300px;">184</div>
<div class="t r rw" style="left:226px;top:536px;width:300px;">1.080,78</div>
<div class="t r rw" style="left:328px;top:536px;width:300px;">109,61</div>
<div class="t r rw" style="left:437px;top:536px;width:300px;">560,00</div>
<div class="t r rw" style="left:601px;top:536px;width:300px;">816,85</div>
<div class="t r rw" style="left:687px;top:536px;width:300px;">142,60</div>
<div class="t r rw" style="left:776px;top:536px;width:300px;">80,00</div>
<div class="t r rw" style="left:848px;top:536px;width:300px;">0,00</div>
<div class="t r rw" style="left:967px;top:536px;width:300px;">0,00</div>
<div class="t r rw" style="left:1039px;top:536px;width:300px;">10,80</div>
<div class="a" style="left:767px;top:537px;width:14px;height:13px;background:#fff;border:1px solid #9a9ac8"></div>
<svg class="a" style="left:767px;top:537px" width="14" height="13"><path d="M3.8 5.6 L4.7 10.1 L11.6 2.8" fill="none" stroke="#1a30d8" stroke-width="2"/></svg>
<div class="a" style="left:1402px;top:537px;width:14px;height:13px;background:#fff;border:1px solid #9a9ac8"></div>
<div class="a" style="left:101px;top:556px;width:1482px;height:1px;background:#5a7af0"></div>
<div class="t rw" style="left:104px;top:560px;">37.</div>
<div class="t rw" style="left:152px;top:560px;letter-spacing:0.28px">Šarić Valentina</div>
<div class="t r rw" style="left:61px;top:560px;width:300px;">23</div>
<div class="t r rw" style="left:129px;top:560px;width:300px;">191</div>
<div class="t r rw" style="left:226px;top:560px;width:300px;">1.036,38</div>
<div class="t r rw" style="left:328px;top:560px;width:300px;">131,81</div>
<div class="t r rw" style="left:437px;top:560px;width:300px;">560,00</div>
<div class="t r rw" style="left:601px;top:560px;width:300px;">791,10</div>
<div class="t r rw" style="left:687px;top:560px;width:300px;">26,54</div>
<div class="t r rw" style="left:776px;top:560px;width:300px;">80,00</div>
<div class="t r rw" style="left:848px;top:560px;width:300px;">0,00</div>
<div class="t r rw" style="left:967px;top:560px;width:300px;">0,00</div>
<div class="t r rw" style="left:1039px;top:560px;width:300px;">10,36</div>
<div class="a" style="left:767px;top:561px;width:14px;height:13px;background:#fff;border:1px solid #9a9ac8"></div>
<svg class="a" style="left:767px;top:561px" width="14" height="13"><path d="M3.8 5.6 L4.7 10.1 L11.6 2.8" fill="none" stroke="#1a30d8" stroke-width="2"/></svg>
<div class="a" style="left:1402px;top:561px;width:14px;height:13px;background:#fff;border:1px solid #9a9ac8"></div>
<div class="a" style="left:101px;top:580px;width:1482px;height:1px;background:#5a7af0"></div>
<div class="t rw" style="left:104px;top:584px;">38.</div>
<div class="t rw" style="left:152px;top:584px;letter-spacing:0.28px">Šimić Tereza</div>
<div class="t r rw" style="left:61px;top:584px;width:300px;">23</div>
<div class="t r rw" style="left:129px;top:584px;width:300px;">184</div>
<div class="t r rw" style="left:226px;top:584px;width:300px;">1.095,83</div>
<div class="t r rw" style="left:328px;top:584px;width:300px;">102,09</div>
<div class="t r rw" style="left:437px;top:584px;width:300px;">840,00</div>
<div class="t r rw" style="left:601px;top:584px;width:300px;">881,58</div>
<div class="t r rw" style="left:687px;top:584px;width:300px;">146,51</div>
<div class="t r rw" style="left:776px;top:584px;width:300px;">80,00</div>
<div class="t r rw" style="left:848px;top:584px;width:300px;">0,00</div>
<div class="t r rw" style="left:967px;top:584px;width:300px;">0,00</div>
<div class="t r rw" style="left:1039px;top:584px;width:300px;">10,96</div>
<div class="a" style="left:767px;top:585px;width:14px;height:13px;background:#fff;border:1px solid #9a9ac8"></div>
<svg class="a" style="left:767px;top:585px" width="14" height="13"><path d="M3.8 5.6 L4.7 10.1 L11.6 2.8" fill="none" stroke="#1a30d8" stroke-width="2"/></svg>
<div class="a" style="left:1402px;top:585px;width:14px;height:13px;background:#fff;border:1px solid #9a9ac8"></div>
<div class="a" style="left:101px;top:604px;width:1482px;height:1px;background:#5a7af0"></div>
<div class="t rw" style="left:104px;top:608px;">39.</div>
<div class="t rw" style="left:152px;top:608px;letter-spacing:0.28px">Tomić David</div>
<div class="t r rw" style="left:61px;top:608px;width:300px;">23</div>
<div class="t r rw" style="left:129px;top:608px;width:300px;">184</div>
<div class="t r rw" style="left:226px;top:608px;width:300px;">1.456,73</div>
<div class="t r rw" style="left:328px;top:608px;width:300px;">0,00</div>
<div class="t r rw" style="left:437px;top:608px;width:300px;">840,00</div>
<div class="t r rw" style="left:601px;top:608px;width:300px;">1.100,30</div>
<div class="t r rw" style="left:687px;top:608px;width:300px;">179,40</div>
<div class="t r rw" style="left:776px;top:608px;width:300px;">80,00</div>
<div class="t r rw" style="left:848px;top:608px;width:300px;">0,00</div>
<div class="t r rw" style="left:967px;top:608px;width:300px;">0,00</div>
<div class="t r rw" style="left:1039px;top:608px;width:300px;">0,00</div>
<div class="a" style="left:767px;top:609px;width:14px;height:13px;background:#fff;border:1px solid #9a9ac8"></div>
<svg class="a" style="left:767px;top:609px" width="14" height="13"><path d="M3.8 5.6 L4.7 10.1 L11.6 2.8" fill="none" stroke="#1a30d8" stroke-width="2"/></svg>
<div class="a" style="left:1402px;top:609px;width:14px;height:13px;background:#fff;border:1px solid #9a9ac8"></div>
<div class="a" style="left:101px;top:628px;width:1482px;height:1px;background:#5a7af0"></div>
<div class="t rw" style="left:104px;top:632px;">40.</div>
<div class="t rw" style="left:152px;top:632px;letter-spacing:0.28px">Tomić Katarina</div>
<div class="t r rw" style="left:61px;top:632px;width:300px;">23</div>
<div class="t r rw" style="left:129px;top:632px;width:300px;">184</div>
<div class="t r rw" style="left:226px;top:632px;width:300px;">1.100,00</div>
<div class="t r rw" style="left:328px;top:632px;width:300px;">100,00</div>
<div class="t r rw" style="left:437px;top:632px;width:300px;">560,00</div>
<div class="t r rw" style="left:601px;top:632px;width:300px;">828,00</div>
<div class="t r rw" style="left:687px;top:632px;width:300px;">128,80</div>
<div class="t r rw" style="left:776px;top:632px;width:300px;">80,00</div>
<div class="t r rw" style="left:848px;top:632px;width:300px;">0,00</div>
<div class="t r rw" style="left:967px;top:632px;width:300px;">0,00</div>
<div class="t r rw" style="left:1039px;top:632px;width:300px;">11,00</div>
<div class="a" style="left:767px;top:633px;width:14px;height:13px;background:#fff;border:1px solid #9a9ac8"></div>
<svg class="a" style="left:767px;top:633px" width="14" height="13"><path d="M3.8 5.6 L4.7 10.1 L11.6 2.8" fill="none" stroke="#1a30d8" stroke-width="2"/></svg>
<div class="a" style="left:1402px;top:633px;width:14px;height:13px;background:#fff;border:1px solid #9a9ac8"></div>
<div class="a" style="left:101px;top:652px;width:1482px;height:1px;background:#5a7af0"></div>
<div class="t rw" style="left:104px;top:656px;">41.</div>
<div class="t rw" style="left:152px;top:656px;letter-spacing:0.28px">Varga Ela</div>
<div class="t r rw" style="left:61px;top:656px;width:300px;">23</div>
<div class="t r rw" style="left:129px;top:656px;width:300px;">184</div>
<div class="t r rw" style="left:226px;top:656px;width:300px;">1.004,94</div>
<div class="t r rw" style="left:328px;top:656px;width:300px;">147,53</div>
<div class="t r rw" style="left:437px;top:656px;width:300px;">840,00</div>
<div class="t r rw" style="left:601px;top:656px;width:300px;">826,08</div>
<div class="t r rw" style="left:687px;top:656px;width:300px;">100,00</div>
<div class="t r rw" style="left:776px;top:656px;width:300px;">80,00</div>
<div class="t r rw" style="left:848px;top:656px;width:300px;">0,00</div>
<div class="t r rw" style="left:967px;top:656px;width:300px;">0,00</div>
<div class="t r rw" style="left:1039px;top:656px;width:300px;">0,00</div>
<div class="a" style="left:767px;top:657px;width:14px;height:13px;background:#fff;border:1px solid #9a9ac8"></div>
<svg class="a" style="left:767px;top:657px" width="14" height="13"><path d="M3.8 5.6 L4.7 10.1 L11.6 2.8" fill="none" stroke="#1a30d8" stroke-width="2"/></svg>
<div class="a" style="left:1402px;top:657px;width:14px;height:13px;background:#fff;border:1px solid #9a9ac8"></div>
<div class="a" style="left:101px;top:676px;width:1482px;height:1px;background:#5a7af0"></div>
<div class="t rw" style="left:104px;top:680px;">42.</div>
<div class="t rw" style="left:152px;top:680px;letter-spacing:0.28px">Varga Maja</div>
<div class="t r rw" style="left:61px;top:680px;width:300px;">23</div>
<div class="t r rw" style="left:129px;top:680px;width:300px;">186</div>
<div class="t r rw" style="left:226px;top:680px;width:300px;">1.100,00</div>
<div class="t r rw" style="left:328px;top:680px;width:300px;">100,00</div>
<div class="t r rw" style="left:437px;top:680px;width:300px;">560,00</div>
<div class="t r rw" style="left:601px;top:680px;width:300px;">828,00</div>
<div class="t r rw" style="left:687px;top:680px;width:300px;">86,86</div>
<div class="t r rw" style="left:776px;top:680px;width:300px;">130,00</div>
<div class="t r rw" style="left:848px;top:680px;width:300px;">0,00</div>
<div class="t r rw" style="left:967px;top:680px;width:300px;">0,00</div>
<div class="t r rw" style="left:1039px;top:680px;width:300px;">11,00</div>
<div class="a" style="left:767px;top:681px;width:14px;height:13px;background:#fff;border:1px solid #9a9ac8"></div>
<svg class="a" style="left:767px;top:681px" width="14" height="13"><path d="M3.8 5.6 L4.7 10.1 L11.6 2.8" fill="none" stroke="#1a30d8" stroke-width="2"/></svg>
<div class="a" style="left:1402px;top:681px;width:14px;height:13px;background:#fff;border:1px solid #9a9ac8"></div>
<div class="a" style="left:101px;top:700px;width:1482px;height:1px;background:#5a7af0"></div>
<div class="t rw" style="left:104px;top:704px;">43.</div>
<div class="t rw" style="left:152px;top:704px;letter-spacing:0.28px">Vuković Karla</div>
<div class="t r rw" style="left:61px;top:704px;width:300px;">23</div>
<div class="t r rw" style="left:129px;top:704px;width:300px;">191</div>
<div class="t r rw" style="left:226px;top:704px;width:300px;">2.303,32</div>
<div class="t r rw" style="left:328px;top:704px;width:300px;">0,00</div>
<div class="t r rw" style="left:437px;top:704px;width:300px;">560,00</div>
<div class="t r rw" style="left:601px;top:704px;width:300px;">1.586,12</div>
<div class="t r rw" style="left:687px;top:704px;width:300px;">202,40</div>
<div class="t r rw" style="left:776px;top:704px;width:300px;">80,00</div>
<div class="t r rw" style="left:848px;top:704px;width:300px;">0,00</div>
<div class="t r rw" style="left:967px;top:704px;width:300px;">0,00</div>
<div class="t r rw" style="left:1039px;top:704px;width:300px;">0,00</div>
<div class="a" style="left:767px;top:705px;width:14px;height:13px;background:#fff;border:1px solid #9a9ac8"></div>
<svg class="a" style="left:767px;top:705px" width="14" height="13"><path d="M3.8 5.6 L4.7 10.1 L11.6 2.8" fill="none" stroke="#1a30d8" stroke-width="2"/></svg>
<div class="a" style="left:1402px;top:705px;width:14px;height:13px;background:#fff;border:1px solid #9a9ac8"></div>
<div class="a" style="left:101px;top:724px;width:1482px;height:1px;background:#5a7af0"></div>
<div class="t rw" style="left:104px;top:728px;">44.</div>
<div class="t rw" style="left:152px;top:728px;letter-spacing:0.28px">Zelić Gabriel</div>
<div class="t r rw" style="left:61px;top:728px;width:300px;">23</div>
<div class="t r rw" style="left:129px;top:728px;width:300px;">184</div>
<div class="t r rw" style="left:226px;top:728px;width:300px;">1.100,00</div>
<div class="t r rw" style="left:328px;top:728px;width:300px;">100,00</div>
<div class="t r rw" style="left:437px;top:728px;width:300px;">560,00</div>
<div class="t r rw" style="left:601px;top:728px;width:300px;">828,00</div>
<div class="t r rw" style="left:687px;top:728px;width:300px;">20,70</div>
<div class="t r rw" style="left:776px;top:728px;width:300px;">80,00</div>
<div class="t r rw" style="left:848px;top:728px;width:300px;">0,00</div>
<div class="t r rw" style="left:967px;top:728px;width:300px;">0,00</div>
<div class="t r rw" style="left:1039px;top:728px;width:300px;">0,00</div>
<div class="a" style="left:767px;top:729px;width:14px;height:13px;background:#fff;border:1px solid #9a9ac8"></div>
<svg class="a" style="left:767px;top:729px" width="14" height="13"><path d="M3.8 5.6 L4.7 10.1 L11.6 2.8" fill="none" stroke="#1a30d8" stroke-width="2"/></svg>
<div class="a" style="left:1402px;top:729px;width:14px;height:13px;background:#fff;border:1px solid #9a9ac8"></div>
<div class="a" style="left:101px;top:748px;width:1482px;height:1px;background:#5a7af0"></div>
<div class="a" style="left:101px;top:749px;width:1482px;height:23px;background:#d0d0d0"></div>
<div class="a" style="left:101px;top:772px;width:1482px;height:1px;background:#5a7af0"></div>
<div class="a" style="left:1582px;top:172px;width:1px;height:609px;background:#5a7af0"></div>
<div class="t rw tot" style="left:152px;top:752px;">Ukupno:</div>
<div class="t r rw tot" style="left:226px;top:752px;width:300px;">53.464,14</div>
<div class="t r rw tot" style="left:601px;top:752px;width:300px;">40.753,77</div>
<div class="t r rw tot" style="left:687px;top:752px;width:300px;">4.953,02</div>
<div class="t r rw tot" style="left:776px;top:752px;width:300px;">3.649,00</div>
<div class="t r rw tot" style="left:848px;top:752px;width:300px;">497,71</div>
<div class="t r rw tot" style="left:967px;top:752px;width:300px;">0,00</div>
<div class="t r rw tot" style="left:1039px;top:752px;width:300px;">270,92</div>
<div class="a" style="left:1574px;top:437px;width:8px;height:23px;background:#ffff00"></div>
<div class="a" style="left:1582px;top:307px;width:13px;height:31px;border-radius:6px;background:linear-gradient(90deg,#e8e8e8,#fff 40%,#d0d0d0);border:1px solid #202050"></div>
<div class="a" style="left:1585px;top:318px;width:7px;height:1px;background:#888"></div>
<div class="a" style="left:1585px;top:321px;width:7px;height:1px;background:#888"></div>
<div class="a" style="left:1585px;top:324px;width:7px;height:1px;background:#888"></div>
<div class="a" style="left:1585px;top:327px;width:7px;height:1px;background:#888"></div>
<div class="a" style="left:101px;top:781px;width:1488px;height:91px;background:#000090;overflow:hidden">
<svg width="0" height="0" style="position:absolute"><defs><linearGradient id="ring" x1="0.2" y1="0" x2="0.8" y2="1"><stop offset="0" stop-color="#f4f4f4"/><stop offset="0.5" stop-color="#c8c8c8"/><stop offset="1" stop-color="#8a8a8a"/></linearGradient><linearGradient id="ring2" x1="0.8" y1="0" x2="0.2" y2="1"><stop offset="0" stop-color="#9a9a9a"/><stop offset="0.6" stop-color="#d0d0d0"/><stop offset="1" stop-color="#f0f0f0"/></linearGradient><radialGradient id="disc" cx="0.5" cy="0.62" r="0.62"><stop offset="0" stop-color="#5690ec"/><stop offset="0.75" stop-color="#3a74e0"/><stop offset="1" stop-color="#1c48b8"/></radialGradient><clipPath id="kbclip"><rect x="12.5" y="11" width="24.8" height="25" rx="1"/></clipPath></defs></svg>
<svg class="a" style="left:39px;top:4px" width="48" height="48" viewBox="0 0 48 48"><circle cx="24" cy="24" r="23.1" fill="url(#ring)" stroke="#6a6a70" stroke-width="0.6"/><circle cx="24" cy="24" r="19.6" fill="url(#ring2)"/><circle cx="24" cy="24" r="18.2" fill="url(#disc)"/><g transform="rotate(27 24 24)"><rect x="15" y="11" width="18" height="24" fill="#e6e6e6" stroke="#555" stroke-width="0.8"/><rect x="12.5" y="11" width="4.5" height="24" fill="#2a2a2a"/><path d="M21 17h7M21 19.5h7M23 23h3M23 30h3" stroke="#1a5a9a" stroke-width="1.2"/></g></svg>
<div class="il" style="left:13px;top:44px">Novi unos</div>
<svg class="a" style="left:115px;top:4px" width="48" height="48" viewBox="0 0 48 48"><circle cx="24" cy="24" r="23.1" fill="url(#ring)" stroke="#6a6a70" stroke-width="0.6"/><circle cx="24" cy="24" r="19.6" fill="url(#ring2)"/><circle cx="24" cy="24" r="18.2" fill="url(#disc)"/><defs><clipPath id="bkclip"><path d="M12.5 20 Q24.8 23.5 37.2 20 L33 38 Q24.6 40.5 16.2 38 Z"/></clipPath></defs><path d="M14.5 17.5 L25.5 12.5 L30 22 L17.5 25.5 Z" fill="#ffffc4" stroke="#8a8a20" stroke-width="0.7"/><path d="M21 14.5 L28.5 11.5 L31.5 21 L24 23 Z" fill="#ffffb0" stroke="#8a8a20" stroke-width="0.7"/><path d="M12.5 20 Q24.8 23.5 37.2 20 L33 38 Q24.6 40.5 16.2 38 Z" fill="#f6f6e4" stroke="#282828" stroke-width="0.9"/><g clip-path="url(#bkclip)"><path d="M-12 18 L10 40 M10 18 L-12 40 M-6 18 L16 40 M16 18 L-6 40 M0 18 L22 40 M22 18 L0 40 M6 18 L28 40 M28 18 L6 40 M12 18 L34 40 M34 18 L12 40 M18 18 L40 40 M40 18 L18 40 M24 18 L46 40 M46 18 L24 40 M30 18 L52 40 M52 18 L30 40 M36 18 L58 40 M58 18 L36 40 " stroke="#505050" stroke-width="0.6" fill="none"/></g><ellipse cx="24.8" cy="20" rx="12.3" ry="2.6" fill="none" stroke="#282828" stroke-width="1.1"/><path d="M13 20.5 Q24.8 24 36.6 20.5" stroke="#fff" stroke-width="1" fill="none"/></svg>
<div class="il" style="left:89px;top:44px">Obriši</div>
<svg class="a" style="left:191px;top:4px" width="48" height="48" viewBox="0 0 48 48"><circle cx="24" cy="24" r="23.1" fill="url(#ring)" stroke="#6a6a70" stroke-width="0.6"/><circle cx="24" cy="24" r="19.6" fill="url(#ring2)"/><circle cx="24" cy="24" r="18.2" fill="url(#disc)"/><path d="M15 15 L23 12.5 L25.5 14.5 L32 13 L33.5 28 L19 32 Z" fill="#d8e4f4" stroke="#404850" stroke-width="0.7"/><path d="M19 15 L29.5 12 L31.5 26 L21 28.5 Z" fill="#fffff4" stroke="#b0b050" stroke-width="0.6"/><path d="M12.8 19.5 L26.5 17 L34 31 L20 34.6 Z" fill="#a8cef6" stroke="#404850" stroke-width="0.8"/><path d="M14.5 20.5 L21 32" stroke="#e8f4ff" stroke-width="1.2"/></svg>
<div class="il" style="left:165px;top:42px">Primici po<br>vrsti rada</div>
<svg class="a" style="left:267px;top:4px" width="48" height="48" viewBox="0 0 48 48"><circle cx="24" cy="24" r="23.1" fill="url(#ring)" stroke="#6a6a70" stroke-width="0.6"/><circle cx="24" cy="24" r="19.6" fill="url(#ring2)"/><circle cx="24" cy="24" r="18.2" fill="url(#disc)"/><rect x="15" y="15" width="18" height="18" rx="3" fill="#fff8c8"/><path d="M23 35.5 H18.5 Q12.5 35.5 12.5 29.5 V18.5 Q12.5 12.5 18.5 12.5 H21 V10.5 L26.8 15.2 L21 20 V18 H20 Q18 18 18 20 V28 Q18 30 20 30 H23 Z" fill="#d81818" stroke="#101010" stroke-width="0.8"/><path d="M25 12.5 H29.5 Q35.5 12.5 35.5 18.5 V29.5 Q35.5 35.5 29.5 35.5 H27 V37.5 L21.2 32.8 L27 28 V30 H28 Q30 30 30 28 V20 Q30 18 28 18 H25 Z" fill="#0818a8" stroke="#101010" stroke-width="0.8"/></svg>
<div class="il" style="left:241px;top:42px">Proknjiži<br>obračun<br>plaće</div>
<svg class="a" style="left:343px;top:4px" width="48" height="48" viewBox="0 0 48 48"><circle cx="24" cy="24" r="23.1" fill="url(#ring)" stroke="#6a6a70" stroke-width="0.6"/><circle cx="24" cy="24" r="19.6" fill="url(#ring2)"/><circle cx="24" cy="24" r="18.2" fill="url(#disc)"/><path d="M11 27 L29 17.5 L40 24 L22 33.5 Z" fill="#000" opacity="0.35"/><path d="M10.6 24.6 L28 15 L38.8 21 L38.8 23 L20.8 31.9 L10.6 26.6 Z" fill="#101010"/><path d="M10.6 24.6 L28 15 L38.8 21 L20.8 29.7 Z" fill="#f8f8f8" stroke="#181818" stroke-width="0.8"/><path d="M12.8 24.5 L23.4 18.8 L28.4 22 L17.8 27.6 Z" fill="#2a3ad0"/><path d="M15 23.3 L20 26.3 M17.4 22 L22.6 25 M19.8 20.7 L25.2 23.6 M14.8 25.7 L25.5 19.9 M16.6 26.7 L27 21" stroke="#c8d0ff" stroke-width="0.5"/><path d="M19 28.3 L28.6 23.2 L30.4 24.3 L20.8 29.4 Z" fill="#e01818"/><path d="M24.4 18 L28.6 16 L34.6 20.4 L30.4 22.4 Z" fill="#108020"/></svg>
<div class="il" style="left:317px;top:44px">Platni nalozi</div>
<svg class="a" style="left:419px;top:4px" width="48" height="48" viewBox="0 0 48 48"><circle cx="24" cy="24" r="23.1" fill="url(#ring)" stroke="#6a6a70" stroke-width="0.6"/><circle cx="24" cy="24" r="19.6" fill="url(#ring2)"/><circle cx="24" cy="24" r="18.2" fill="url(#disc)"/><path d="M24 11 L33 9 L36 19 L27 22 Z" fill="#ffffa0" stroke="#c0c040" stroke-width="0.6"/><path d="M11 23 L26 17 L39 22 L39 31 L25 37 L11 31 Z" fill="#b8b8b8" stroke="#606060" stroke-width="0.7"/><path d="M11 23 L25 28 L39 22 L26 17Z" fill="#e0e0e0"/><path d="M25 28 V37" stroke="#707070" stroke-width="0.8"/><circle cx="15" cy="24" r="0.9" fill="#20c020"/><circle cx="17.5" cy="25" r="0.9" fill="#e02020"/></svg>
<div class="il" style="left:393px;top:42px">Ispis<br>obračuna<br>plaća</div>
<svg class="a" style="left:495px;top:4px" width="48" height="48" viewBox="0 0 48 48"><circle cx="24" cy="24" r="23.1" fill="url(#ring)" stroke="#6a6a70" stroke-width="0.6"/><circle cx="24" cy="24" r="19.6" fill="url(#ring2)"/><circle cx="24" cy="24" r="18.2" fill="url(#disc)"/><path d="M12 25 L24 18 L38 25 L25 33 Z" fill="#303030"/><path d="M14 25 L20 12 L23 13.5 L17 26.5Z M17 26.5 L23 13.5 L26 15 L20 28Z M20 28 L26 15 L29 16.5 L23 29.5Z M23 29.5 L29 16.5 L32 18 L26 31Z M26 31 L32 18 L35 19.5 L29 32Z" fill="#f6f6f6" stroke="#303030" stroke-width="0.6"/><path d="M11 26 L25 33.5 L25 40.5 L11 33 Z" fill="#e8b070" stroke="#402010" stroke-width="0.7"/><path d="M25 33.5 L38.5 25 L38.5 32 L25 40.5 Z" fill="#c88848" stroke="#402010" stroke-width="0.7"/><path d="M15 30 L21 33 L21 36 L15 33 Z" fill="#c08850" stroke="#603818" stroke-width="0.5"/></svg>
<div class="il" style="left:469px;top:42px">Ispis platnih<br>lista</div>
<svg class="a" style="left:571px;top:4px" width="48" height="48" viewBox="0 0 48 48"><circle cx="24" cy="24" r="23.1" fill="url(#ring)" stroke="#6a6a70" stroke-width="0.6"/><circle cx="24" cy="24" r="19.6" fill="url(#ring2)"/><circle cx="24" cy="24" r="18.2" fill="url(#disc)"/><path d="M25 13 L33 12 L37 16 L37 31 L26 33 Z" fill="#ffffc0" stroke="#707070" stroke-width="0.7"/><circle cx="30" cy="19" r="3" fill="#2080e0"/><path d="M28 18 Q30 16 32 19 Q30 21 28 20Z" fill="#30a030"/><path d="M27 24h9M27 26.5h9M27 29h8" stroke="#3050d0" stroke-width="1"/><path d="M12.5 36 Q12 29 16 27 L19 25.5 L23 26 Q27 28 27.5 36 Z" fill="#383838"/><path d="M15.5 29 Q18 27 21 28.5 Q24 30 24 34" stroke="#d0d0d0" stroke-width="1.3" fill="none"/><path d="M16 17 Q16 12 20.5 12 Q25 12 25 17 L24.5 22 Q23 26 20.5 26 Q18 26 16.5 22 Z" fill="#202020"/><path d="M17.5 17.5 Q18 14.5 20.8 14.5 Q23.5 14.5 23.8 17.5 L23.3 21.5 Q22.3 24.5 20.6 24.5 Q18.8 24.5 18 21.5 Z" fill="#c4c4c4"/><path d="M19 18.5h1.5M21.5 18.5h1.5M20.5 20 V22" stroke="#505050" stroke-width="0.7"/></svg>
<div class="il" style="left:545px;top:42px">Pl. lista za<br>djelatnika</div>
<svg class="a" style="left:647px;top:4px" width="48" height="48" viewBox="0 0 48 48"><circle cx="24" cy="24" r="23.1" fill="url(#ring)" stroke="#6a6a70" stroke-width="0.6"/><circle cx="24" cy="24" r="19.6" fill="url(#ring2)"/><circle cx="24" cy="24" r="18.2" fill="url(#disc)"/><path d="M12 23 L27 13.5 L36.5 18.5 L36.5 20 L21.5 29.5 L12 24.5 Z" fill="#8a8a8a"/><path d="M12 23 L27 13.5 L36.5 18.5 L21.5 28 Z" fill="#ececec" stroke="#707070" stroke-width="0.6"/><path d="M14 29 L29 19.5 L38 24.5 L38 26 L23 35.5 L14 30.5 Z" fill="#8a8a8a"/><path d="M14 29 L29 19.5 L38 24.5 L23 34 Z" fill="#f2f2f2" stroke="#707070" stroke-width="0.6"/><path d="M28.5 14.5 L30 17.5 L33 17.5 Z" fill="#f06060"/><path d="M30.5 20.5 L32 23.5 L35 23.5 Z" fill="#f06060"/><path d="M16 23 L23 18.5 M18 24.5 L25 20 M20 26 L27 21.5 M18 29 L25 24.5 M20 30.5 L27 26 M22 32 L29 27.5" stroke="#a0a0a0" stroke-width="0.8"/></svg>
<div class="il" style="left:621px;top:42px">Sažetak<br>obračuna</div>
<svg class="a" style="left:723px;top:4px" width="48" height="48" viewBox="0 0 48 48"><circle cx="24" cy="24" r="23.1" fill="url(#ring)" stroke="#6a6a70" stroke-width="0.6"/><circle cx="24" cy="24" r="19.6" fill="url(#ring2)"/><circle cx="24" cy="24" r="18.2" fill="url(#disc)"/><path d="M12 23 L27 13.5 L36.5 18.5 L36.5 20 L21.5 29.5 L12 24.5 Z" fill="#8a8a8a"/><path d="M12 23 L27 13.5 L36.5 18.5 L21.5 28 Z" fill="#ececec" stroke="#707070" stroke-width="0.6"/><path d="M14 29 L29 19.5 L38 24.5 L38 26 L23 35.5 L14 30.5 Z" fill="#8a8a8a"/><path d="M14 29 L29 19.5 L38 24.5 L23 34 Z" fill="#f2f2f2" stroke="#707070" stroke-width="0.6"/><path d="M28.5 14.5 L30 17.5 L33 17.5 Z" fill="#c0c020"/><path d="M30.5 20.5 L32 23.5 L35 23.5 Z" fill="#c0c020"/><path d="M16 23 L23 18.5 M18 24.5 L25 20 M20 26 L27 21.5 M18 29 L25 24.5 M20 30.5 L27 26 M22 32 L29 27.5" stroke="#a0a0a0" stroke-width="0.8"/></svg>
<div class="il" style="left:697px;top:42px">Prikaz radnih<br>sati</div>
<svg class="a" style="left:799px;top:4px" width="48" height="48" viewBox="0 0 48 48"><circle cx="24" cy="24" r="23.1" fill="url(#ring)" stroke="#6a6a70" stroke-width="0.6"/><circle cx="24" cy="24" r="19.6" fill="url(#ring2)"/><circle cx="24" cy="24" r="18.2" fill="url(#disc)"/><path d="M25 13 L33 12 L37 16 L37 31 L26 33 Z" fill="#ffffc0" stroke="#707070" stroke-width="0.7"/><circle cx="30" cy="19" r="3" fill="#2080e0"/><path d="M28 18 Q30 16 32 19 Q30 21 28 20Z" fill="#30a030"/><path d="M27 24h9M27 26.5h9M27 29h8" stroke="#3050d0" stroke-width="1"/><path d="M12.5 36 Q12 29 16 27 L19 25.5 L23 26 Q27 28 27.5 36 Z" fill="#383838"/><path d="M15.5 29 Q18 27 21 28.5 Q24 30 24 34" stroke="#d0d0d0" stroke-width="1.3" fill="none"/><path d="M16 17 Q16 12 20.5 12 Q25 12 25 17 L24.5 22 Q23 26 20.5 26 Q18 26 16.5 22 Z" fill="#202020"/><path d="M17.5 17.5 Q18 14.5 20.8 14.5 Q23.5 14.5 23.8 17.5 L23.3 21.5 Q22.3 24.5 20.6 24.5 Q18.8 24.5 18 21.5 Z" fill="#c4c4c4"/><path d="M19 18.5h1.5M21.5 18.5h1.5M20.5 20 V22" stroke="#505050" stroke-width="0.7"/></svg>
<div class="il" style="left:773px;top:42px">Porez i prirez<br>po općinama</div>
<svg class="a" style="left:875px;top:4px" width="48" height="48" viewBox="0 0 48 48"><circle cx="24" cy="24" r="23.1" fill="url(#ring)" stroke="#6a6a70" stroke-width="0.6"/><circle cx="24" cy="24" r="19.6" fill="url(#ring2)"/><circle cx="24" cy="24" r="18.2" fill="url(#disc)"/><path d="M17 15 L35 17 L31 35 L15 35 L19 31 Z" fill="#ffff70" stroke="#505020" stroke-width="0.7"/><path d="M15 35 L19 31 L21 33Z" fill="#d0c040"/><circle cx="19" cy="17" r="2.3" fill="#e01010"/><circle cx="24" cy="17.5" r="2.3" fill="#e01010"/><path d="M19 17 L30 18" stroke="#600" stroke-width="1"/><path d="M20 22 Q23 25 26 23" stroke="#e0a040" stroke-width="1" fill="none"/></svg>
<div class="il" style="left:849px;top:42px">Podaci<br>djelatnika</div>
<svg class="a" style="left:951px;top:4px" width="48" height="48" viewBox="0 0 48 48"><circle cx="24" cy="24" r="23.1" fill="url(#ring)" stroke="#6a6a70" stroke-width="0.6"/><circle cx="24" cy="24" r="19.6" fill="url(#ring2)"/><circle cx="24" cy="24" r="18.2" fill="url(#disc)"/><path d="M12 23 L27 13.5 L36.5 18.5 L36.5 20 L21.5 29.5 L12 24.5 Z" fill="#8a8a8a"/><path d="M12 23 L27 13.5 L36.5 18.5 L21.5 28 Z" fill="#ececec" stroke="#707070" stroke-width="0.6"/><path d="M14 29 L29 19.5 L38 24.5 L38 26 L23 35.5 L14 30.5 Z" fill="#8a8a8a"/><path d="M14 29 L29 19.5 L38 24.5 L23 34 Z" fill="#f2f2f2" stroke="#707070" stroke-width="0.6"/><path d="M28.5 14.5 L30 17.5 L33 17.5 Z" fill="#c0c020"/><path d="M30.5 20.5 L32 23.5 L35 23.5 Z" fill="#c0c020"/><path d="M16 23 L23 18.5 M18 24.5 L25 20 M20 26 L27 21.5 M18 29 L25 24.5 M20 30.5 L27 26 M22 32 L29 27.5" stroke="#a0a0a0" stroke-width="0.8"/></svg>
<div class="il" style="left:925px;top:42px">Obračunaj<br>putni trošak</div>
<svg class="a" style="left:1027px;top:4px" width="48" height="48" viewBox="0 0 48 48"><circle cx="24" cy="24" r="23.1" fill="url(#ring)" stroke="#6a6a70" stroke-width="0.6"/><circle cx="24" cy="24" r="19.6" fill="url(#ring2)"/><circle cx="24" cy="24" r="18.2" fill="url(#disc)"/><path d="M11 27 L29 17.5 L40 24 L22 33.5 Z" fill="#000" opacity="0.35"/><path d="M10.6 24.6 L28 15 L38.8 21 L38.8 23 L20.8 31.9 L10.6 26.6 Z" fill="#101010"/><path d="M10.6 24.6 L28 15 L38.8 21 L20.8 29.7 Z" fill="#f8f8f8" stroke="#181818" stroke-width="0.8"/><path d="M12.8 24.5 L23.4 18.8 L28.4 22 L17.8 27.6 Z" fill="#2a3ad0"/><path d="M15 23.3 L20 26.3 M17.4 22 L22.6 25 M19.8 20.7 L25.2 23.6 M14.8 25.7 L25.5 19.9 M16.6 26.7 L27 21" stroke="#c8d0ff" stroke-width="0.5"/><path d="M19 28.3 L28.6 23.2 L30.4 24.3 L20.8 29.4 Z" fill="#e01818"/><path d="M24.4 18 L28.6 16 L34.6 20.4 L30.4 22.4 Z" fill="#108020"/></svg>
<div class="il" style="left:1001px;top:42px">Sindik.<br>članarine</div>
<svg class="a" style="left:1103px;top:4px" width="48" height="48" viewBox="0 0 48 48"><circle cx="24" cy="24" r="23.1" fill="url(#ring)" stroke="#6a6a70" stroke-width="0.6"/><circle cx="24" cy="24" r="19.6" fill="url(#ring2)"/><circle cx="24" cy="24" r="18.2" fill="url(#disc)"/><path d="M17 14 Q17 11 20 11 L27 13 Q30 14 30 17 L30 35 L20 33 Q17 32 17 30Z" fill="#5a5a5a" stroke="#101010" stroke-width="0.7"/><path d="M18 13 L29 15.5" stroke="#30e030" stroke-width="2.2"/><path d="M21 18 V32" stroke="#208040" stroke-width="1"/><circle cx="24" cy="22" r="1.6" fill="#309060"/><circle cx="24" cy="26" r="0.8" fill="#909090"/><path d="M29 33 Q33 33 32 30" stroke="#909090" stroke-width="0.8" fill="none"/></svg>
<div class="il" style="left:1077px;top:42px">Promijeni<br>MIO2</div>
<svg class="a" style="left:1179px;top:4px" width="48" height="48" viewBox="0 0 48 48"><circle cx="24" cy="24" r="23.1" fill="url(#ring)" stroke="#6a6a70" stroke-width="0.6"/><circle cx="24" cy="24" r="19.6" fill="url(#ring2)"/><circle cx="24" cy="24" r="18.2" fill="url(#disc)"/><path d="M12 23 L27 13.5 L36.5 18.5 L36.5 20 L21.5 29.5 L12 24.5 Z" fill="#8a8a8a"/><path d="M12 23 L27 13.5 L36.5 18.5 L21.5 28 Z" fill="#ececec" stroke="#707070" stroke-width="0.6"/><path d="M14 29 L29 19.5 L38 24.5 L38 26 L23 35.5 L14 30.5 Z" fill="#8a8a8a"/><path d="M14 29 L29 19.5 L38 24.5 L23 34 Z" fill="#f2f2f2" stroke="#707070" stroke-width="0.6"/><path d="M28.5 14.5 L30 17.5 L33 17.5 Z" fill="#c0c020"/><path d="M30.5 20.5 L32 23.5 L35 23.5 Z" fill="#c0c020"/><path d="M16 23 L23 18.5 M18 24.5 L25 20 M20 26 L27 21.5 M18 29 L25 24.5 M20 30.5 L27 26 M22 32 L29 27.5" stroke="#a0a0a0" stroke-width="0.8"/></svg>
<div class="il" style="left:1153px;top:42px">Stavka bez<br>netto</div>
<svg class="a" style="left:1255px;top:4px" width="48" height="48" viewBox="0 0 48 48"><circle cx="24" cy="24" r="23.1" fill="url(#ring)" stroke="#6a6a70" stroke-width="0.6"/><circle cx="24" cy="24" r="19.6" fill="url(#ring2)"/><circle cx="24" cy="24" r="18.2" fill="url(#disc)"/><g clip-path="url(#kbclip)"><rect x="12" y="11" width="25.5" height="25.5" fill="#383838"/><g transform="matrix(1 0.4 -0.733 0.633 24.6 19.5)"><rect x="-30.9" y="-30.9" width="7.8" height="7.8" rx="1" fill="#d8d8d8"/><rect x="-30.299999999999997" y="-30.5" width="6" height="5.8" rx="0.8" fill="#fafafa"/><path d="M-28.099999999999998 -28.4 h2 v1.5" stroke="#181818" stroke-width="0.9" fill="none"/><rect x="-30.9" y="-21.9" width="7.8" height="7.8" rx="1" fill="#d8d8d8"/><rect x="-30.299999999999997" y="-21.5" width="6" height="5.8" rx="0.8" fill="#fafafa"/><path d="M-28.099999999999998 -19.4 h2 v1.5" stroke="#181818" stroke-width="0.9" fill="none"/><rect x="-30.9" y="-12.9" width="7.8" height="7.8" rx="1" fill="#d8d8d8"/><rect x="-30.299999999999997" y="-12.5" width="6" height="5.8" rx="0.8" fill="#fafafa"/><path d="M-28.099999999999998 -10.4 h2 v1.5" stroke="#181818" stroke-width="0.9" fill="none"/><rect x="-30.9" y="-3.9" width="7.8" height="7.8" rx="1" fill="#d8d8d8"/><rect x="-30.299999999999997" y="-3.5" width="6" height="5.8" rx="0.8" fill="#fafafa"/><path d="M-28.099999999999998 -1.4 h2 v1.5" stroke="#181818" stroke-width="0.9" fill="none"/><rect x="-30.9" y="5.1" width="7.8" height="7.8" rx="1" fill="#d8d8d8"/><rect x="-30.299999999999997" y="5.5" width="6" height="5.8" rx="0.8" fill="#fafafa"/><path d="M-28.099999999999998 7.6 h2 v1.5" stroke="#181818" stroke-width="0.9" fill="none"/><rect x="-30.9" y="14.1" width="7.8" height="7.8" rx="1" fill="#d8d8d8"/><rect x="-30.299999999999997" y="14.5" width="6" height="5.8" rx="0.8" fill="#fafafa"/><path d="M-28.099999999999998 16.6 h2 v1.5" stroke="#181818" stroke-width="0.9" fill="none"/><rect x="-21.9" y="-30.9" width="7.8" height="7.8" rx="1" fill="#d8d8d8"/><rect x="-21.299999999999997" y="-30.5" width="6" height="5.8" rx="0.8" fill="#fafafa"/><path d="M-19.099999999999998 -28.4 h2 v1.5" stroke="#181818" stroke-width="0.9" fill="none"/><rect x="-21.9" y="-21.9" width="7.8" height="7.8" rx="1" fill="#d8d8d8"/><rect x="-21.299999999999997" y="-21.5" width="6" height="5.8" rx="0.8" fill="#fafafa"/><path d="M-19.099999999999998 -19.4 h2 v1.5" stroke="#181818" stroke-width="0.9" fill="none"/><rect x="-21.9" y="-12.9" width="7.8" height="7.8" rx="1" fill="#d8d8d8"/><rect x="-21.299999999999997" y="-12.5" width="6" height="5.8" rx="0.8" fill="#fafafa"/><path d="M-19.099999999999998 -10.4 h2 v1.5" stroke="#181818" stroke-width="0.9" fill="none"/><rect x="-21.9" y="-3.9" width="7.8" height="7.8" rx="1" fill="#d8d8d8"/><rect x="-21.299999999999997" y="-3.5" width="6" height="5.8" rx="0.8" fill="#fafafa"/><path d="M-19.099999999999998 -1.4 h2 v1.5" stroke="#181818" stroke-width="0.9" fill="none"/><rect x="-21.9" y="5.1" width="7.8" height="7.8" rx="1" fill="#d8d8d8"/><rect x="-21.299999999999997" y="5.5" width="6" height="5.8" rx="0.8" fill="#fafafa"/><path d="M-19.099999999999998 7.6 h2 v1.5" stroke="#181818" stroke-width="0.9" fill="none"/><rect x="-21.9" y="14.1" width="7.8" height="7.8" rx="1" fill="#d8d8d8"/><rect x="-21.299999999999997" y="14.5" width="6" height="5.8" rx="0.8" fill="#fafafa"/><path d="M-19.099999999999998 16.6 h2 v1.5" stroke="#181818" stroke-width="0.9" fill="none"/><rect x="-12.9" y="-30.9" width="7.8" height="7.8" rx="1" fill="#d8d8d8"/><rect x="-12.3" y="-30.5" width="6" height="5.8" rx="0.8" fill="#fafafa"/><path d="M-10.100000000000001 -28.4 h2 v1.5" stroke="#181818" stroke-width="0.9" fill="none"/><rect x="-12.9" y="-21.9" width="7.8" height="7.8" rx="1" fill="#d8d8d8"/><rect x="-12.3" y="-21.5" width="6" height="5.8" rx="0.8" fill="#fafafa"/><path d="M-10.100000000000001 -19.4 h2 v1.5" stroke="#181818" stroke-width="0.9" fill="none"/><rect x="-12.9" y="-12.9" width="7.8" height="7.8" rx="1" fill="#d8d8d8"/><rect x="-12.3" y="-12.5" width="6" height="5.8" rx="0.8" fill="#fafafa"/><path d="M-10.100000000000001 -10.4 h2 v1.5" stroke="#181818" stroke-width="0.9" fill="none"/><rect x="-12.9" y="-3.9" width="7.8" height="7.8" rx="1" fill="#d8d8d8"/><rect x="-12.3" y="-3.5" width="6" height="5.8" rx="0.8" fill="#fafafa"/><path d="M-10.100000000000001 -1.4 h2 v1.5" stroke="#181818" stroke-width="0.9" fill="none"/><rect x="-12.9" y="5.1" width="7.8" height="7.8" rx="1" fill="#d8d8d8"/><rect x="-12.3" y="5.5" width="6" height="5.8" rx="0.8" fill="#fafafa"/><path d="M-10.100000000000001 7.6 h2 v1.5" stroke="#181818" stroke-width="0.9" fill="none"/><rect x="-12.9" y="14.1" width="7.8" height="7.8" rx="1" fill="#d8d8d8"/><rect x="-12.3" y="14.5" width="6" height="5.8" rx="0.8" fill="#fafafa"/><path d="M-10.100000000000001 16.6 h2 v1.5" stroke="#181818" stroke-width="0.9" fill="none"/><rect x="-3.9" y="-30.9" width="7.8" height="7.8" rx="1" fill="#d8d8d8"/><rect x="-3.3" y="-30.5" width="6" height="5.8" rx="0.8" fill="#fafafa"/><path d="M-1.1 -28.4 h2 v1.5" stroke="#181818" stroke-width="0.9" fill="none"/><rect x="-3.9" y="-21.9" width="7.8" height="7.8" rx="1" fill="#d8d8d8"/><rect x="-3.3" y="-21.5" width="6" height="5.8" rx="0.8" fill="#fafafa"/><path d="M-1.1 -19.4 h2 v1.5" stroke="#181818" stroke-width="0.9" fill="none"/><rect x="-3.9" y="-12.9" width="7.8" height="7.8" rx="1" fill="#d8d8d8"/><rect x="-3.3" y="-12.5" width="6" height="5.8" rx="0.8" fill="#fafafa"/><path d="M-1.1 -10.4 h2 v1.5" stroke="#181818" stroke-width="0.9" fill="none"/><rect x="-3.9" y="-3.9" width="7.8" height="7.8" rx="1" fill="#d8d8d8"/><rect x="-3.3" y="-3.5" width="6" height="5.8" rx="0.8" fill="#fafafa"/><path d="M-1.1 -1.4 h2 v1.5" stroke="#181818" stroke-width="0.9" fill="none"/><rect x="-3.9" y="5.1" width="7.8" height="7.8" rx="1" fill="#d8d8d8"/><rect x="-3.3" y="5.5" width="6" height="5.8" rx="0.8" fill="#fafafa"/><path d="M-1.1 7.6 h2 v1.5" stroke="#181818" stroke-width="0.9" fill="none"/><rect x="-3.9" y="14.1" width="7.8" height="7.8" rx="1" fill="#d8d8d8"/><rect x="-3.3" y="14.5" width="6" height="5.8" rx="0.8" fill="#fafafa"/><path d="M-1.1 16.6 h2 v1.5" stroke="#181818" stroke-width="0.9" fill="none"/><rect x="5.1" y="-30.9" width="7.8" height="7.8" rx="1" fill="#d8d8d8"/><rect x="5.699999999999999" y="-30.5" width="6" height="5.8" rx="0.8" fill="#fafafa"/><path d="M7.8999999999999995 -28.4 h2 v1.5" stroke="#181818" stroke-width="0.9" fill="none"/><rect x="5.1" y="-21.9" width="7.8" height="7.8" rx="1" fill="#d8d8d8"/><rect x="5.699999999999999" y="-21.5" width="6" height="5.8" rx="0.8" fill="#fafafa"/><path d="M7.8999999999999995 -19.4 h2 v1.5" stroke="#181818" stroke-width="0.9" fill="none"/><rect x="5.1" y="-12.9" width="7.8" height="7.8" rx="1" fill="#d8d8d8"/><rect x="5.699999999999999" y="-12.5" width="6" height="5.8" rx="0.8" fill="#fafafa"/><path d="M7.8999999999999995 -10.4 h2 v1.5" stroke="#181818" stroke-width="0.9" fill="none"/><rect x="5.1" y="-3.9" width="7.8" height="7.8" rx="1" fill="#d8d8d8"/><rect x="5.699999999999999" y="-3.5" width="6" height="5.8" rx="0.8" fill="#fafafa"/><path d="M7.8999999999999995 -1.4 h2 v1.5" stroke="#181818" stroke-width="0.9" fill="none"/><rect x="5.1" y="5.1" width="7.8" height="7.8" rx="1" fill="#d8d8d8"/><rect x="5.699999999999999" y="5.5" width="6" height="5.8" rx="0.8" fill="#fafafa"/><path d="M7.8999999999999995 7.6 h2 v1.5" stroke="#181818" stroke-width="0.9" fill="none"/><rect x="5.1" y="14.1" width="7.8" height="7.8" rx="1" fill="#d8d8d8"/><rect x="5.699999999999999" y="14.5" width="6" height="5.8" rx="0.8" fill="#fafafa"/><path d="M7.8999999999999995 16.6 h2 v1.5" stroke="#181818" stroke-width="0.9" fill="none"/><rect x="14.1" y="-30.9" width="7.8" height="7.8" rx="1" fill="#d8d8d8"/><rect x="14.7" y="-30.5" width="6" height="5.8" rx="0.8" fill="#fafafa"/><path d="M16.9 -28.4 h2 v1.5" stroke="#181818" stroke-width="0.9" fill="none"/><rect x="14.1" y="-21.9" width="7.8" height="7.8" rx="1" fill="#d8d8d8"/><rect x="14.7" y="-21.5" width="6" height="5.8" rx="0.8" fill="#fafafa"/><path d="M16.9 -19.4 h2 v1.5" stroke="#181818" stroke-width="0.9" fill="none"/><rect x="14.1" y="-12.9" width="7.8" height="7.8" rx="1" fill="#d8d8d8"/><rect x="14.7" y="-12.5" width="6" height="5.8" rx="0.8" fill="#fafafa"/><path d="M16.9 -10.4 h2 v1.5" stroke="#181818" stroke-width="0.9" fill="none"/><rect x="14.1" y="-3.9" width="7.8" height="7.8" rx="1" fill="#d8d8d8"/><rect x="14.7" y="-3.5" width="6" height="5.8" rx="0.8" fill="#fafafa"/><path d="M16.9 -1.4 h2 v1.5" stroke="#181818" stroke-width="0.9" fill="none"/><rect x="14.1" y="5.1" width="7.8" height="7.8" rx="1" fill="#d8d8d8"/><rect x="14.7" y="5.5" width="6" height="5.8" rx="0.8" fill="#fafafa"/><path d="M16.9 7.6 h2 v1.5" stroke="#181818" stroke-width="0.9" fill="none"/><rect x="14.1" y="14.1" width="7.8" height="7.8" rx="1" fill="#d8d8d8"/><rect x="14.7" y="14.5" width="6" height="5.8" rx="0.8" fill="#fafafa"/><path d="M16.9 16.6 h2 v1.5" stroke="#181818" stroke-width="0.9" fill="none"/></g></g></svg>
<div class="il" style="left:1229px;top:42px">Ne odabiri<br>cijelo polje</div>
</div>
<svg class="a" style="left:1487.6px;top:782.7px" width="22.4" height="22.4" viewBox="0 0 22 22"><defs><radialGradient id="ga1498" cx="0.45" cy="0.3" r="0.75"><stop offset="0" stop-color="#b0e080"/><stop offset="0.6" stop-color="#70b840"/><stop offset="1" stop-color="#3a8020"/></radialGradient></defs><circle cx="11" cy="11" r="11" fill="url(#ga1498)"/><path d="M4.2 11 L10.6 5.2 V8.9 H16.6 V13.1 H10.6 V16.8 Z" fill="#fff"/></svg>
<svg class="a" style="left:1520.6px;top:782.7px" width="22.4" height="22.4" viewBox="0 0 22 22"><defs><radialGradient id="ga1531" cx="0.45" cy="0.3" r="0.75"><stop offset="0" stop-color="#b0e080"/><stop offset="0.6" stop-color="#70b840"/><stop offset="1" stop-color="#3a8020"/></radialGradient></defs><circle cx="11" cy="11" r="11" fill="url(#ga1531)"/><path d="M11 3.6 L15.8 11.2 H13 V17.8 H9 V11.2 H6.2 Z" fill="#fff"/></svg>
<svg class="a" style="left:1553.6px;top:782.7px" width="22.4" height="22.4" viewBox="0 0 22 22"><defs><radialGradient id="ga1564" cx="0.45" cy="0.3" r="0.75"><stop offset="0" stop-color="#b0e080"/><stop offset="0.6" stop-color="#70b840"/><stop offset="1" stop-color="#3a8020"/></radialGradient></defs><circle cx="11" cy="11" r="11" fill="url(#ga1564)"/><path d="M17.8 11 L11.4 5.2 V8.9 H5.4 V13.1 H11.4 V16.8 Z" fill="#fff"/></svg>
<div class="a" style="left:0;top:881px;width:1599px;height:16px;background:#e8ecf8;border-top:1px solid #a0a0a0;border-bottom:1px solid #70a8c0;border-right:1px solid #a0a0a0"></div>
<div class="a" style="left:0;top:897px;width:1600px;height:3px;background:#d4e4f4"></div>
<div class="a" style="left:7px;top:882px;width:158px;height:14px;background:linear-gradient(#ffd8d8,#f88080 60%,#f06060);border:1px solid #90a8c0"></div>
<div class="t c " style="left:7.0px;top:879px;width:158px;color:#000;font-weight:bold;font-size:11px;line-height:20px">Obračun plaće za 7/2024</div>
<div class="a" style="left:1598px;top:41px;width:1px;height:840px;background:#d0d0d0"></div>
</body></html>
